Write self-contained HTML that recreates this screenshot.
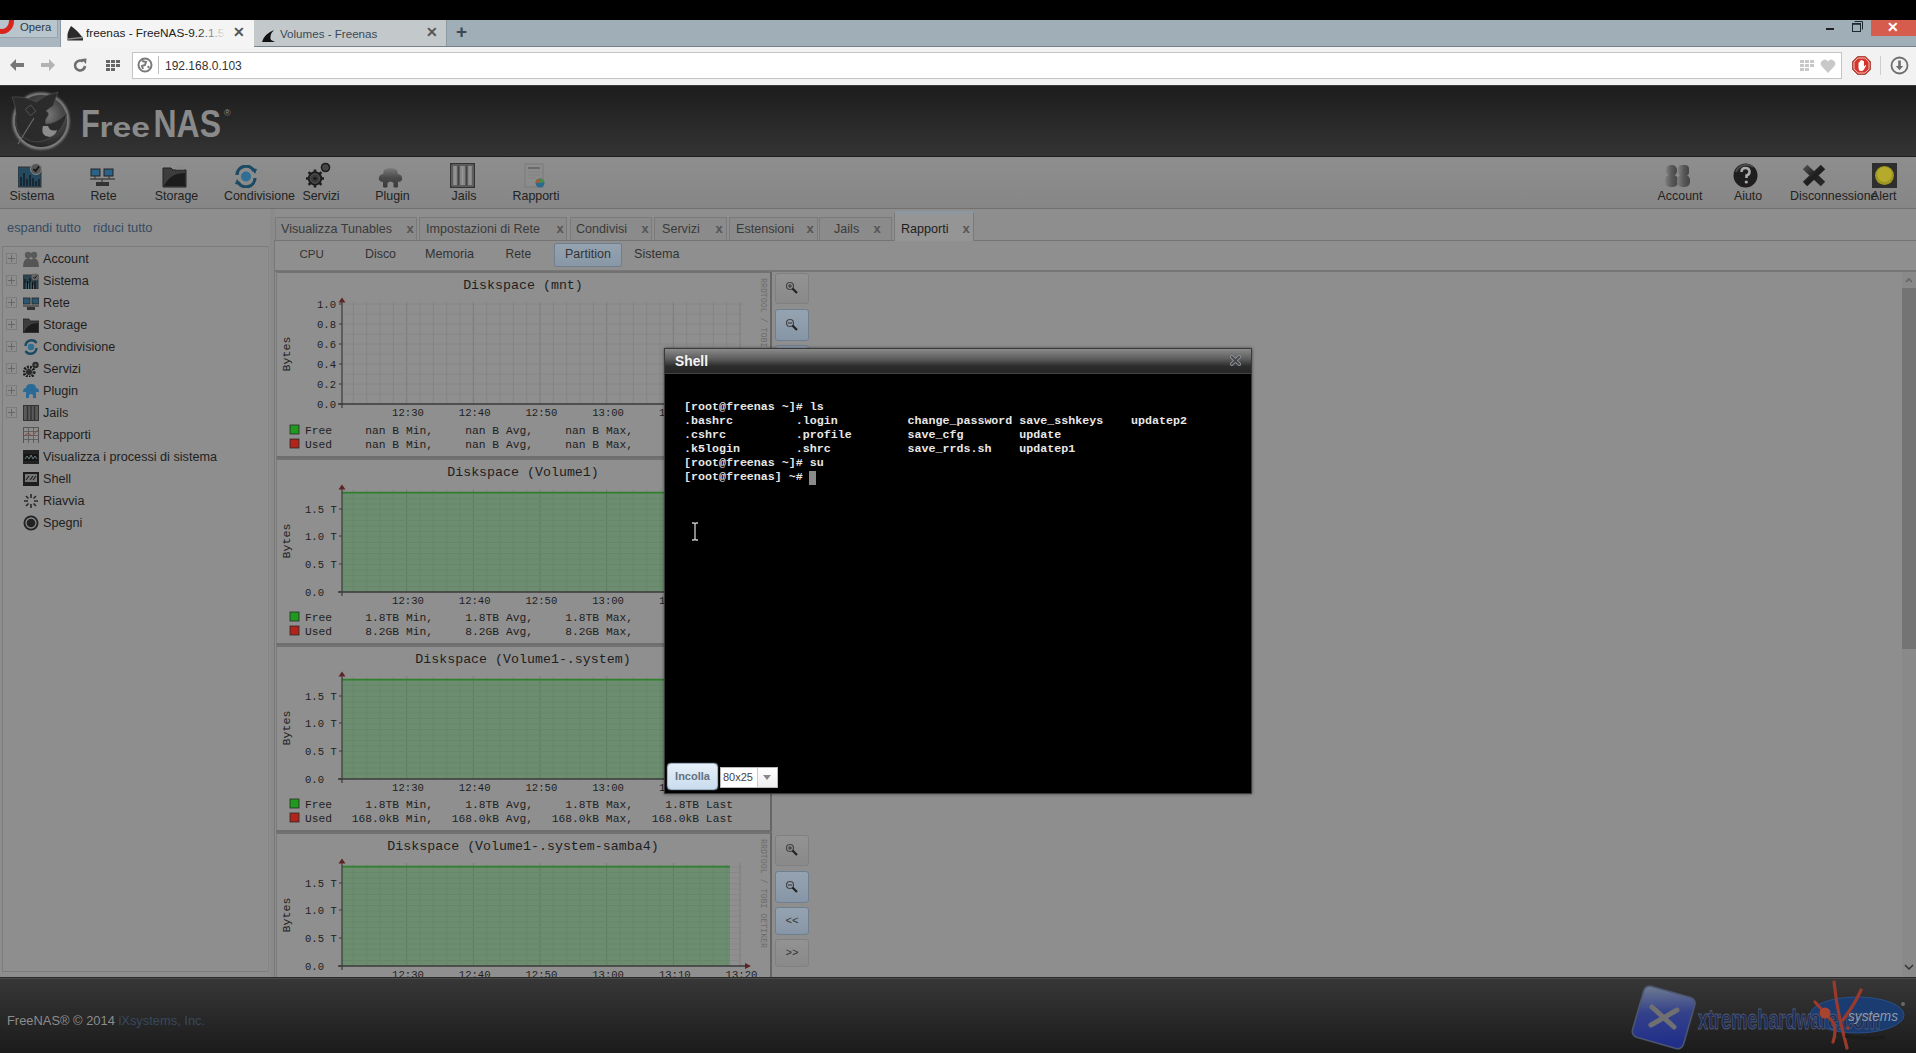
<!DOCTYPE html>
<html><head><meta charset="utf-8">
<style>
*{box-sizing:border-box}
html,body{margin:0;padding:0}
body{width:1916px;height:1053px;overflow:hidden;position:relative;background:#8e8e8e;font-family:"Liberation Sans",sans-serif;}
.a{position:absolute}
.mono{font-family:"Liberation Mono",monospace}
</style></head><body>
<!-- top black -->
<div class="a" style="left:0;top:0;width:1916px;height:20px;background:#000"></div>
<!-- tab strip -->
<div class="a" id="tabstrip" style="left:0;top:20px;width:1916px;height:27px;background:#a0aeb8;border-bottom:1px solid #74828c"></div>
<!-- address row -->
<div class="a" id="addr" style="left:0;top:47px;width:1916px;height:38px;background:#f2f2f2"></div>

<!-- Opera button -->
<div class="a" style="left:0;top:20px;width:61px;height:27px;background:#a9b6bf;border-right:1px solid #8d9aa3"></div>
<div class="a" style="left:0;top:20px;width:58px;height:18px;background:#b9c5cc;border:1px solid #97a4ad;border-top:none;border-left:none"></div>
<svg class="a" style="left:0;top:20px" width="16" height="14"><ellipse cx="2" cy="1" rx="9.5" ry="10.5" fill="none" stroke="#d8261c" stroke-width="5"/></svg>
<div class="a" style="left:20px;top:20px;font-size:11.3px;color:#2c3a44;line-height:15px">Opera</div>
<!-- active tab -->
<div class="a" style="left:61px;top:20px;width:193px;height:28px;background:#f4f4f4"></div>
<svg class="a" style="left:67px;top:25px" width="17" height="16" viewBox="0 0 17 16"><rect x="0" y="0" width="17" height="16" fill="#f4f4f4"/><path d="M0.5 15.5 L0.5 9 Q2 4 4 1 Q9 4 16 13 L16 15.5 Z" fill="#2a2a2a"/><path d="M1 14 L16 12.5" stroke="#8a8a8a" stroke-width="1.3"/></svg>
<div class="a" style="left:86px;top:26px;font-size:11.8px;color:#222;white-space:nowrap;line-height:15px;width:140px;overflow:hidden">freenas - FreeNAS-9.2.1.5-R</div>
<div class="a" style="left:196px;top:24px;width:30px;height:18px;background:linear-gradient(90deg,rgba(244,244,244,0),#f4f4f4)"></div>
<div class="a" style="left:233px;top:24px;font-size:14px;color:#555;font-weight:bold;line-height:16px">&#x2715;</div>
<!-- inactive tab -->
<div class="a" style="left:254px;top:20px;width:193px;height:26px;background:#c3c8cb;border-right:1px solid #8e9aa2"></div>
<svg class="a" style="left:262px;top:30px" width="14" height="12" viewBox="0 0 14 12"><path d="M0 12 Q2 4 12 0 Q7 5 9 10 L13 12 Z" fill="#111"/></svg>
<div class="a" style="left:280px;top:26px;font-size:11.6px;color:#3a4a55;white-space:nowrap;line-height:15px">Volumes - Freenas</div>
<div class="a" style="left:426px;top:24px;font-size:14px;color:#555;font-weight:bold;line-height:16px">&#x2715;</div>
<!-- plus -->
<div class="a" style="left:456px;top:21px;font-size:19px;color:#3b4852;font-weight:bold;line-height:22px">+</div>
<!-- window controls -->
<div class="a" style="left:1826px;top:28px;width:8px;height:2px;background:#222"></div>
<svg class="a" style="left:1851px;top:20px" width="13" height="13" viewBox="0 0 13 13"><path d="M3.5 1.5H11.5V9.5" fill="none" stroke="#1e2a30" stroke-width="1"/><rect x="1.5" y="3.5" width="8" height="8" fill="none" stroke="#1e2a30" stroke-width="1"/><path d="M1.5 4H9.5" stroke="#1e2a30" stroke-width="1.6"/></svg>
<div class="a" style="left:1871px;top:20px;width:45px;height:16px;background:#d65c4e"></div>
<div class="a" style="left:1887px;top:19px;font-size:14px;color:#fff;font-weight:bold;line-height:16px">&#x2715;</div>
<!-- nav icons -->
<svg class="a" style="left:9px;top:58px" width="16" height="14" viewBox="0 0 16 14"><path d="M1 7 L7 1 L7 5 L15 5 L15 9 L7 9 L7 13 Z" fill="#777"/></svg>
<svg class="a" style="left:40px;top:58px" width="16" height="14" viewBox="0 0 16 14"><path d="M15 7 L9 1 L9 5 L1 5 L1 9 L9 9 L9 13 Z" fill="#b3b3b3"/></svg>
<svg class="a" style="left:73px;top:58px" width="15" height="15" viewBox="0 0 15 15"><path d="M12 8 A5 5 0 1 1 10 3.5" fill="none" stroke="#6e6e6e" stroke-width="2.6"/><path d="M8 1 L13.5 0.5 L13 6 Z" fill="#6e6e6e"/></svg>
<svg class="a" style="left:106px;top:60px" width="15" height="11" viewBox="0 0 15 11"><g fill="#666"><rect x="0" y="0" width="4" height="3"/><rect x="5" y="0" width="4" height="3"/><rect x="10" y="0" width="4" height="3"/><rect x="0" y="4" width="4" height="3"/><rect x="5" y="4" width="4" height="3"/><rect x="10" y="4" width="4" height="3"/><rect x="0" y="8" width="4" height="3"/><rect x="5" y="8" width="4" height="3"/></g></svg>
<!-- url field -->
<div class="a" style="left:132px;top:52px;width:1710px;height:27px;background:#fff;border:1px solid #c4c4c4"></div>
<svg class="a" style="left:137px;top:57px" width="16" height="16" viewBox="0 0 16 16"><circle cx="8" cy="8" r="6.5" fill="none" stroke="#7a7a7a" stroke-width="2"/><path d="M5 4 L9 5 L8 8 L5 9 L6 12 M11 9 L12 11" stroke="#7a7a7a" stroke-width="2" fill="none"/></svg>
<div class="a" style="left:158px;top:56px;width:1px;height:18px;background:#bbb"></div>
<div class="a" style="left:165px;top:59px;font-size:12px;color:#333;line-height:15px">192.168.0.103</div>
<svg class="a" style="left:1800px;top:60px" width="15" height="12" viewBox="0 0 15 12"><g fill="#c8c8c8"><rect x="0" y="0" width="4" height="3"/><rect x="5" y="0" width="4" height="3"/><rect x="10" y="0" width="4" height="3"/><rect x="0" y="4" width="4" height="3"/><rect x="5" y="4" width="4" height="3"/><rect x="10" y="4" width="4" height="3"/><rect x="0" y="8" width="4" height="3"/><rect x="5" y="8" width="4" height="3"/></g></svg>
<svg class="a" style="left:1820px;top:59px" width="16" height="14" viewBox="0 0 16 14"><path d="M8 14 L1.5 7 A3.8 3.8 0 0 1 8 2.5 A3.8 3.8 0 0 1 14.5 7 Z" fill="#c8c8c8"/></svg>
<svg class="a" style="left:1852px;top:56px" width="19" height="19" viewBox="0 0 19 19"><path d="M5.6 0.5 L13.4 0.5 L18.5 5.6 L18.5 13.4 L13.4 18.5 L5.6 18.5 L0.5 13.4 L0.5 5.6 Z" fill="#d6342a" stroke="#9a3a30" stroke-width="0.8"/><path d="M6.1 2 L12.9 2 L17 6.1 L17 12.9 L12.9 17 L6.1 17 L2 12.9 L2 6.1 Z" fill="none" stroke="#f4d0c8" stroke-width="0.9"/><path d="M6.5 10 L6.5 6.5 Q7.2 5.8 7.8 6.5 L7.8 9 L7.8 4.8 Q8.5 4 9.2 4.8 L9.2 8.8 L9.2 4.3 Q9.9 3.6 10.6 4.3 L10.6 9 L10.6 5.2 Q11.3 4.6 12 5.2 L12 10.5 L13.2 9.2 Q14 8.8 14.2 9.6 L12 13.5 Q11 15 9 15 Q6.5 15 6.5 12 Z" fill="#fff"/></svg>
<div class="a" style="left:1880px;top:56px;width:1px;height:19px;background:#ccc"></div>
<svg class="a" style="left:1890px;top:56px" width="19" height="19" viewBox="0 0 19 19"><circle cx="9.5" cy="9.5" r="8" fill="none" stroke="#6e6e6e" stroke-width="1.8"/><path d="M9.5 4.5 L9.5 11" stroke="#6e6e6e" stroke-width="2.6"/><path d="M5.8 10 L13.2 10 L9.5 14.2 Z" fill="#6e6e6e"/></svg>

<!-- freenas header -->
<div class="a" id="hdr" style="left:0;top:85px;width:1916px;height:71px;background:linear-gradient(#1c1c1c,#343434)"></div>
<div class="a" style="left:0;top:156px;width:1916px;height:1px;background:#1e1e1e"></div>
<!-- toolbar -->
<div class="a" id="tb" style="left:0;top:157px;width:1916px;height:52px;background:linear-gradient(#8e8e8e,#868686);border-bottom:1px solid #707070"></div>

<div class="a" style="left:0;top:85px;width:1916px;height:1px;background:#3a3a3a"></div>
<!-- shark logo -->
<svg class="a" style="left:6px;top:88px" width="70" height="66" viewBox="0 0 70 66">
<defs><radialGradient id="ball" cx="62%" cy="38%" r="62%"><stop offset="0%" stop-color="#7a7a7a"/><stop offset="45%" stop-color="#4a4a4a"/><stop offset="100%" stop-color="#262626"/></radialGradient>
<filter id="gl" x="-20%" y="-20%" width="140%" height="140%"><feGaussianBlur stdDeviation="1.2"/></filter></defs>
<circle cx="35" cy="33" r="27" fill="none" stroke="#8a8a8a" stroke-width="3" filter="url(#gl)"/>
<circle cx="35" cy="33" r="26" fill="url(#ball)"/>
<path d="M6 9 Q20 8 30 14 Q40 6 52 4 Q49 12 47 18 Q43 20 40 23 Q44 25 42 28 Q38 32 40 36 Q50 36 61 25 Q58 42 44 50 Q30 58 18 50 Q8 42 10 26 Q10 18 6 9 Z" fill="#2b2b2b" stroke="#555" stroke-width="0.6"/>
<path d="M37 38 Q34 48 44 49 Q50 47 51 42 Q44 44 42 38 Z" fill="#8c8c8c"/>
<path d="M12 56 L28 30" stroke="#6a6a6a" stroke-width="1.2"/>
<g transform="rotate(-40 25 22)"><rect x="21" y="18" width="7" height="8" fill="none" stroke="#5a5a5a" stroke-width="0.8"/></g>
</svg>
<svg class="a" style="left:70px;top:95px" width="170" height="50" viewBox="70 95 170 50"><g fill="#8a8a8a" font-family="Liberation Sans" font-weight="bold">
<text x="81" y="136.8" font-size="38.4" textLength="18.8" lengthAdjust="spacingAndGlyphs">F</text>
<text x="99.5" y="136.8" font-size="28" textLength="50.5" lengthAdjust="spacingAndGlyphs">ree</text>
<text x="153.5" y="136.8" font-size="38.4" textLength="67.5" lengthAdjust="spacingAndGlyphs">NAS</text>
</g></svg>
<div class="a" style="left:224px;top:108px;font-size:9px;color:#8a8a8a;line-height:10px">&#174;</div>

<!-- Sistema -->
<svg class="a" style="left:18px;top:163px" width="25" height="25" viewBox="0 0 25 25"><rect x="0" y="4" width="23" height="20" fill="#254a60" stroke="#333"/><g stroke="#111" stroke-width="1.2"><path d="M3 23 V14 M6 23 V10 M9 23 V16 M12 23 V12 M15 23 V15 M18 23 V18 M21 23 V16"/></g><circle cx="18" cy="6" r="5.5" fill="#555" stroke="#888"/><path d="M15.5 6 L17.5 8 L21 3.5" stroke="#111" stroke-width="1.6" fill="none"/></svg>
<div class="a" style="left:9px;top:189px;width:46px;font-size:12.4px;color:#222;line-height:14px;text-align:center">Sistema</div>
<!-- Rete -->
<svg class="a" style="left:90px;top:168px" width="25" height="20" viewBox="0 0 25 20"><rect x="1" y="1" width="9" height="7" fill="#2a6387" stroke="#222"/><rect x="14" y="1" width="9" height="7" fill="#2a6387" stroke="#222"/><path d="M0 11 H25" stroke="#444" stroke-width="1.5"/><path d="M5 8 V11 M19 8 V11 M12 11 V15" stroke="#333"/><rect x="6" y="14" width="13" height="4" fill="#333"/></svg>
<div class="a" style="left:90px;top:189px;width:27px;font-size:12.4px;color:#222;line-height:14px;text-align:center">Rete</div>
<!-- Storage -->
<svg class="a" style="left:162px;top:165px" width="25" height="23" viewBox="0 0 25 23"><path d="M1 3 H9 L11 5 H24 V22 H1 Z" fill="#3d3d3d" stroke="#222"/><path d="M2 21 Q8 8 23 8 V21 Z" fill="#1c1c1c"/><path d="M14 1 H22 V5 H14 Z" fill="#888" opacity="0.6"/></svg>
<div class="a" style="left:154px;top:189px;width:45px;font-size:12.4px;color:#222;line-height:14px;text-align:center">Storage</div>
<!-- Condivisione -->
<svg class="a" style="left:233px;top:165px" width="26" height="23" viewBox="0 0 26 23"><path d="M4 10 A9 9 0 0 1 21 6" fill="none" stroke="#1d4a63" stroke-width="3.2"/><path d="M22 13 A9 9 0 0 1 5 17" fill="none" stroke="#1d4a63" stroke-width="3.2"/><path d="M18 3 L24 4 L22 9 Z M8 20 L2 19 L4 14 Z" fill="#1d4a63"/><circle cx="13" cy="11.5" r="5" fill="#2f6f95"/></svg>
<div class="a" style="left:223px;top:189px;width:73px;font-size:12.4px;color:#222;line-height:14px;text-align:center">Condivisione</div>
<!-- Servizi -->
<svg class="a" style="left:306px;top:162px" width="25" height="26" viewBox="0 0 25 26"><g fill="#1c1c1c"><circle cx="9" cy="16.5" r="7.2"/><g stroke="#1c1c1c" stroke-width="2.6"><path d="M9 7.5V25.5M0 16.5H18M2.6 10.1L15.4 22.9M15.4 10.1L2.6 22.9"/></g></g><circle cx="9" cy="16.5" r="4.8" fill="#3a3a3a" stroke="#555" stroke-width="1"/><circle cx="9" cy="16.5" r="1.8" fill="#1c1c1c"/><circle cx="19.5" cy="5.5" r="4.8" fill="#1c1c1c"/><circle cx="19.5" cy="5.5" r="2.8" fill="#444" stroke="#555" stroke-width="0.8"/></svg>
<div class="a" style="left:301px;top:189px;width:40px;font-size:12.4px;color:#222;line-height:14px;text-align:center">Servizi</div>
<!-- Plugin -->
<svg class="a" style="left:378px;top:167px" width="25" height="21" viewBox="0 0 25 21"><defs><linearGradient id="plg" x1="0" y1="0" x2="0" y2="1"><stop offset="0" stop-color="#7a7a7a"/><stop offset="0.5" stop-color="#4a4a4a"/><stop offset="1" stop-color="#3a3a3a"/></linearGradient></defs><path d="M6 3 Q12.5 -1 19 3 L20 7 Q25 8 24 13 Q23 15 20 15 L20 20 Q18 21 15.5 20 L15.5 16 Q12.5 13 9.5 16 L9.5 20 Q7 21 5 20 L5 15 Q2 15 1 13 Q0 8 5 7 Z" fill="url(#plg)"/></svg>
<div class="a" style="left:375px;top:189px;width:35px;font-size:12.4px;color:#222;line-height:14px;text-align:center">Plugin</div>
<!-- Jails -->
<svg class="a" style="left:450px;top:163px" width="25" height="25" viewBox="0 0 25 25"><rect x="0.75" y="0.75" width="23.5" height="23.5" fill="#858585" stroke="#333" stroke-width="1.5"/><rect x="2.5" y="2.5" width="20" height="20" fill="none" stroke="#555" stroke-width="0.8"/><path d="M8.5 2.5V22.5M16.5 2.5V22.5" stroke="#444" stroke-width="2.2"/><path d="M5 3V22M12.5 3V22M20 3V22" stroke="#999" stroke-width="1.2"/></svg>
<div class="a" style="left:451px;top:189px;width:26px;font-size:12.4px;color:#222;line-height:14px;text-align:center">Jails</div>
<!-- Rapporti -->
<svg class="a" style="left:524px;top:163px" width="22" height="25" viewBox="0 0 22 25"><rect x="1" y="1" width="18" height="23" fill="#8c8c8c" stroke="#7a7a7a"/><path d="M4 5 H16" stroke="#6a6a6a" stroke-width="2"/><path d="M4 9 H16 M4 12 H16 M4 15 H12" stroke="#808080" stroke-width="0.8"/><circle cx="16" cy="20" r="4.5" fill="#2d6a90"/><path d="M11.5 20 A4.5 4.5 0 0 1 16 15.5 L16 20 Z" fill="#9a6030"/><path d="M16 15.5 A4.5 4.5 0 0 1 20.5 19 L16 20 Z" fill="#4a8a4a"/></svg>
<div class="a" style="left:512px;top:189px;width:48px;font-size:12.4px;color:#222;line-height:14px;text-align:center">Rapporti</div>
<!-- Account -->
<svg class="a" style="left:1665px;top:164px" width="26" height="24" viewBox="0 0 26 24"><defs><linearGradient id="accg" x1="0" y1="0" x2="1" y2="0"><stop offset="0" stop-color="#808080"/><stop offset="0.5" stop-color="#5a5a5a"/><stop offset="1" stop-color="#444"/></linearGradient></defs><rect x="1" y="1" width="11" height="11" rx="5" fill="url(#accg)"/><rect x="13" y="1" width="11" height="11" rx="4" fill="url(#accg)"/><rect x="0" y="11" width="13" height="12" rx="5" fill="url(#accg)"/><rect x="12" y="11" width="13" height="12" rx="5" fill="url(#accg)"/></svg>
<div class="a" style="left:1657px;top:189px;width:46px;font-size:12.4px;color:#222;line-height:14px;text-align:center">Account</div>
<!-- Aiuto -->
<svg class="a" style="left:1733px;top:163px" width="25" height="25" viewBox="0 0 25 25"><circle cx="12.5" cy="12.5" r="12" fill="#1e1e1e"/><path d="M3 9 A11 11 0 0 1 20 4" stroke="#4a4a4a" stroke-width="2" fill="none"/><path d="M8.5 9 Q8.5 5 12.5 5 Q16.5 5 16.5 9 Q16.5 11.5 13.5 12.5 L13.5 15" stroke="#aaa" stroke-width="2.6" fill="none"/><circle cx="13.3" cy="19" r="1.6" fill="#aaa"/></svg>
<div class="a" style="left:1733px;top:189px;width:30px;font-size:12.4px;color:#222;line-height:14px;text-align:center">Aiuto</div>
<!-- Disconnessione -->
<svg class="a" style="left:1801px;top:163px" width="26" height="25" viewBox="0 0 26 25"><defs><linearGradient id="xg" x1="0" y1="0" x2="1" y2="1"><stop offset="0" stop-color="#4a4a4a"/><stop offset="0.5" stop-color="#1e1e1e"/><stop offset="1" stop-color="#2a2a2a"/></linearGradient></defs><path d="M4 4 L22 21 M22 4 L4 21" stroke="url(#xg)" stroke-width="6.5" stroke-linecap="butt"/></svg>
<div class="a" style="left:1790px;top:189px;font-size:12.4px;color:#222;line-height:14px;white-space:nowrap">Disconnessione</div>
<!-- Alert -->
<svg class="a" style="left:1871px;top:163px" width="27" height="25" viewBox="0 0 27 25"><rect x="1" y="0" width="25" height="25" fill="#2e2e2e"/><circle cx="13.5" cy="12.5" r="9.5" fill="#9c9520"/><circle cx="13.5" cy="11.5" r="7.5" fill="#b5aa2c"/></svg>
<div class="a" style="left:1871px;top:189px;font-size:12.4px;color:#222;line-height:14px;white-space:nowrap">Alert</div>

<div class="a" style="left:7px;top:220px;font-size:12.9px;color:#354b63;line-height:15px;white-space:nowrap">espandi tutto</div>
<div class="a" style="left:93px;top:220px;font-size:12.9px;color:#354b63;line-height:15px;white-space:nowrap">riduci tutto</div>
<div class="a" style="left:2px;top:246px;width:267px;height:726px;border:1px solid #7c7c7c;border-right-color:#858585"></div>
<div class="a" style="left:270px;top:209px;width:5px;height:768px;background:#8a8a8a"></div>
<div class="a" style="left:274px;top:240px;width:1px;height:737px;background:#777"></div>
<div class="a" style="left:6px;top:253px;width:11px;height:11px;border:1px solid #7c7c7c;background:#8e8e8e"></div>
<div class="a" style="left:8px;top:258px;width:7px;height:1px;background:#666"></div><div class="a" style="left:11px;top:255px;width:1px;height:7px;background:#666"></div>
<svg class="a" style="left:23px;top:251px" width="16" height="16" viewBox="0 0 16 16"><circle cx="5" cy="4" r="3.2" fill="#5a5a5a"/><circle cx="11" cy="4" r="3.2" fill="#5a5a5a"/><path d="M0 16 Q0 8 5 7 Q10 8 10 16Z M6 16 Q6 8 11 7 Q16 8 16 16Z" fill="#555"/></svg>
<div class="a" style="left:43px;top:252px;font-size:12.65px;color:#1e1e1e;line-height:14px;white-space:nowrap">Account</div>
<div class="a" style="left:6px;top:275px;width:11px;height:11px;border:1px solid #7c7c7c;background:#8e8e8e"></div>
<div class="a" style="left:8px;top:280px;width:7px;height:1px;background:#666"></div><div class="a" style="left:11px;top:277px;width:1px;height:7px;background:#666"></div>
<svg class="a" style="left:23px;top:273px" width="16" height="16" viewBox="0 0 16 16"><rect x="0" y="2" width="15" height="14" fill="#2c4450" stroke="#333"/><path d="M2 16V6M4.5 16V8M7 16V5M9.5 16V9M12 16V7" stroke="#111" stroke-width="1.2"/><path d="M3 16V10M5.5 16V11M8 16V9M10.5 16V12" stroke="#5a7a88" stroke-width="0.7"/><circle cx="12" cy="4" r="3.5" fill="#666"/><path d="M10.5 4 L11.8 5.3 L14 2.5" stroke="#111" fill="none"/></svg>
<div class="a" style="left:43px;top:274px;font-size:12.65px;color:#1e1e1e;line-height:14px;white-space:nowrap">Sistema</div>
<div class="a" style="left:6px;top:297px;width:11px;height:11px;border:1px solid #7c7c7c;background:#8e8e8e"></div>
<div class="a" style="left:8px;top:302px;width:7px;height:1px;background:#666"></div><div class="a" style="left:11px;top:299px;width:1px;height:7px;background:#666"></div>
<svg class="a" style="left:23px;top:295px" width="16" height="16" viewBox="0 0 16 16"><rect x="0" y="3" width="7" height="6" fill="#2a5870" stroke="#222" stroke-width="0.8"/><rect x="9" y="3" width="7" height="6" fill="#2a5870" stroke="#222" stroke-width="0.8"/><path d="M0 11H16" stroke="#444" stroke-width="1.4"/><rect x="4" y="12" width="8" height="3" fill="#333"/></svg>
<div class="a" style="left:43px;top:296px;font-size:12.65px;color:#1e1e1e;line-height:14px;white-space:nowrap">Rete</div>
<div class="a" style="left:6px;top:319px;width:11px;height:11px;border:1px solid #7c7c7c;background:#8e8e8e"></div>
<div class="a" style="left:8px;top:324px;width:7px;height:1px;background:#666"></div><div class="a" style="left:11px;top:321px;width:1px;height:7px;background:#666"></div>
<svg class="a" style="left:23px;top:317px" width="16" height="16" viewBox="0 0 16 16"><path d="M0 2H6L7 4H16V16H0Z" fill="#3d3d3d" stroke="#222" stroke-width="0.8"/><path d="M1 15Q5 6 15 6V15Z" fill="#1c1c1c"/></svg>
<div class="a" style="left:43px;top:318px;font-size:12.65px;color:#1e1e1e;line-height:14px;white-space:nowrap">Storage</div>
<div class="a" style="left:6px;top:341px;width:11px;height:11px;border:1px solid #7c7c7c;background:#8e8e8e"></div>
<div class="a" style="left:8px;top:346px;width:7px;height:1px;background:#666"></div><div class="a" style="left:11px;top:343px;width:1px;height:7px;background:#666"></div>
<svg class="a" style="left:23px;top:339px" width="16" height="16" viewBox="0 0 16 16"><path d="M2.5 7A6 6 0 0 1 13.5 4" fill="none" stroke="#1d4a63" stroke-width="2.4"/><path d="M13.5 9A6 6 0 0 1 2.5 12" fill="none" stroke="#1d4a63" stroke-width="2.4"/><circle cx="8" cy="8" r="3.2" fill="#2f6f95"/></svg>
<div class="a" style="left:43px;top:340px;font-size:12.65px;color:#1e1e1e;line-height:14px;white-space:nowrap">Condivisione</div>
<div class="a" style="left:6px;top:363px;width:11px;height:11px;border:1px solid #7c7c7c;background:#8e8e8e"></div>
<div class="a" style="left:8px;top:368px;width:7px;height:1px;background:#666"></div><div class="a" style="left:11px;top:365px;width:1px;height:7px;background:#666"></div>
<svg class="a" style="left:23px;top:361px" width="16" height="16" viewBox="0 0 16 16"><circle cx="6" cy="11" r="5" fill="none" stroke="#1a1a1a" stroke-width="3" stroke-dasharray="1.8 1.2"/><circle cx="6" cy="11" r="3" fill="#2a2a2a"/><circle cx="12.5" cy="4" r="3.2" fill="#2a2a2a"/><circle cx="12.5" cy="4" r="1.2" fill="#666"/></svg>
<div class="a" style="left:43px;top:362px;font-size:12.65px;color:#1e1e1e;line-height:14px;white-space:nowrap">Servizi</div>
<div class="a" style="left:6px;top:385px;width:11px;height:11px;border:1px solid #7c7c7c;background:#8e8e8e"></div>
<div class="a" style="left:8px;top:390px;width:7px;height:1px;background:#666"></div><div class="a" style="left:11px;top:387px;width:1px;height:7px;background:#666"></div>
<svg class="a" style="left:23px;top:383px" width="16" height="16" viewBox="0 0 16 16"><path d="M4 2Q8 0 12 2L13 5Q16 5 16 9L13 9L13 15L10 15L10 12Q8 10 6 12L6 15L3 15L3 9L0 9Q0 5 3 5Z" fill="#2a6a96"/></svg>
<div class="a" style="left:43px;top:384px;font-size:12.65px;color:#1e1e1e;line-height:14px;white-space:nowrap">Plugin</div>
<div class="a" style="left:6px;top:407px;width:11px;height:11px;border:1px solid #7c7c7c;background:#8e8e8e"></div>
<div class="a" style="left:8px;top:412px;width:7px;height:1px;background:#666"></div><div class="a" style="left:11px;top:409px;width:1px;height:7px;background:#666"></div>
<svg class="a" style="left:23px;top:405px" width="16" height="16" viewBox="0 0 16 16"><rect x="0.5" y="0.5" width="15" height="15" fill="#5a5a5a" stroke="#333"/><path d="M4.5 1V15M8 1V15M11.5 1V15" stroke="#333" stroke-width="1.4"/></svg>
<div class="a" style="left:43px;top:406px;font-size:12.65px;color:#1e1e1e;line-height:14px;white-space:nowrap">Jails</div>
<svg class="a" style="left:23px;top:427px" width="16" height="16" viewBox="0 0 16 16"><rect x="0.5" y="0.5" width="15" height="16" fill="#8e8e8e" stroke="#555"/><path d="M0 4.5H16M0 8.5H16M0 12.5H16M5.5 0V16M10.5 0V16" stroke="#555" stroke-width="0.8"/><path d="M1 9L5 6L9 9L15 3" stroke="#8a4a40" stroke-width="1" fill="none"/></svg>
<div class="a" style="left:43px;top:428px;font-size:12.65px;color:#1e1e1e;line-height:14px;white-space:nowrap">Rapporti</div>
<svg class="a" style="left:23px;top:449px" width="16" height="16" viewBox="0 0 16 16"><rect x="0" y="1" width="16" height="14" fill="#222"/><rect x="1" y="5" width="14" height="7" fill="#151515"/><path d="M2 10L4 7L6 10L8 6L10 10L12 7L14 10" stroke="#6a7a80" stroke-width="1" fill="none"/></svg>
<div class="a" style="left:43px;top:450px;font-size:12.65px;color:#1e1e1e;line-height:14px;white-space:nowrap">Visualizza i processi di sistema</div>
<svg class="a" style="left:23px;top:471px" width="16" height="16" viewBox="0 0 16 16"><rect x="0" y="1" width="16" height="14" fill="#1d1d1d"/><rect x="2" y="3" width="12" height="8" fill="#777"/><path d="M3 9L6 5M7 9L10 5M10 9L13 5" stroke="#222" stroke-width="1.2"/></svg>
<div class="a" style="left:43px;top:472px;font-size:12.65px;color:#1e1e1e;line-height:14px;white-space:nowrap">Shell</div>
<svg class="a" style="left:23px;top:493px" width="16" height="16" viewBox="0 0 16 16"><g stroke="#2a2a2a" stroke-width="1.6"><path d="M8 1V5M8 11V15M1 8H5M11 8H15M3 3L5.5 5.5M10.5 10.5L13 13M13 3L10.5 5.5M5.5 10.5L3 13"/></g></svg>
<div class="a" style="left:43px;top:494px;font-size:12.65px;color:#1e1e1e;line-height:14px;white-space:nowrap">Riavvia</div>
<svg class="a" style="left:23px;top:515px" width="16" height="16" viewBox="0 0 16 16"><circle cx="8" cy="8" r="7.5" fill="#222"/><circle cx="8" cy="8" r="5" fill="none" stroke="#888" stroke-width="1.3"/><circle cx="8" cy="8" r="3" fill="#222"/></svg>
<div class="a" style="left:43px;top:516px;font-size:12.65px;color:#1e1e1e;line-height:14px;white-space:nowrap">Spegni</div>
<div class="a" style="left:275px;top:240px;width:1641px;height:1px;background:#747474"></div>
<div class="a" style="left:275px;top:217px;width:142px;height:23px;background:#8b8b8b;border:1px solid #7a7a7a;border-bottom:none;"></div>
<div class="a" style="left:281px;top:222px;font-size:12.6px;color:#3a3a3a;line-height:15px;white-space:nowrap">Visualizza Tunables</div>
<div class="a" style="left:406.5px;top:221px;font-size:13px;font-weight:bold;color:#555;line-height:15px">x</div>
<div class="a" style="left:419px;top:217px;width:148px;height:23px;background:#8b8b8b;border:1px solid #7a7a7a;border-bottom:none;"></div>
<div class="a" style="left:426px;top:222px;font-size:12.6px;color:#3a3a3a;line-height:15px;white-space:nowrap">Impostazioni di Rete</div>
<div class="a" style="left:556.5px;top:221px;font-size:13px;font-weight:bold;color:#555;line-height:15px">x</div>
<div class="a" style="left:570px;top:217px;width:82px;height:23px;background:#8b8b8b;border:1px solid #7a7a7a;border-bottom:none;"></div>
<div class="a" style="left:576px;top:222px;font-size:12.6px;color:#3a3a3a;line-height:15px;white-space:nowrap">Condivisi</div>
<div class="a" style="left:641.5px;top:221px;font-size:13px;font-weight:bold;color:#555;line-height:15px">x</div>
<div class="a" style="left:654px;top:217px;width:73px;height:23px;background:#8b8b8b;border:1px solid #7a7a7a;border-bottom:none;"></div>
<div class="a" style="left:662px;top:222px;font-size:12.6px;color:#3a3a3a;line-height:15px;white-space:nowrap">Servizi</div>
<div class="a" style="left:715.5px;top:221px;font-size:13px;font-weight:bold;color:#555;line-height:15px">x</div>
<div class="a" style="left:729px;top:217px;width:89px;height:23px;background:#8b8b8b;border:1px solid #7a7a7a;border-bottom:none;"></div>
<div class="a" style="left:736px;top:222px;font-size:12.6px;color:#3a3a3a;line-height:15px;white-space:nowrap">Estensioni</div>
<div class="a" style="left:806.5px;top:221px;font-size:13px;font-weight:bold;color:#555;line-height:15px">x</div>
<div class="a" style="left:819px;top:217px;width:73px;height:23px;background:#8b8b8b;border:1px solid #7a7a7a;border-bottom:none;"></div>
<div class="a" style="left:834px;top:222px;font-size:12.6px;color:#3a3a3a;line-height:15px;white-space:nowrap">Jails</div>
<div class="a" style="left:873.5px;top:221px;font-size:13px;font-weight:bold;color:#555;line-height:15px">x</div>
<div class="a" style="left:894px;top:211px;width:80px;height:30px;background:#959595;border:1px solid #7a7a7a;border-bottom:none;border-top:3px solid #8d97a0"></div>
<div class="a" style="left:901px;top:222px;font-size:12.6px;color:#1e1e1e;line-height:15px;white-space:nowrap">Rapporti</div>
<div class="a" style="left:962.5px;top:221px;font-size:13px;font-weight:bold;color:#555;line-height:15px">x</div>
<div class="a" style="left:275px;top:241px;width:1641px;height:31px;background:#8f8f8f;border-bottom:2px solid #767676"></div>
<div class="a" style="left:554px;top:243px;width:68px;height:24px;background:linear-gradient(#95a3b1,#8897a6);border:1px solid #6f7f8f;border-radius:2px"></div>
<div class="a" style="left:299.5px;top:247px;font-size:11.5px;color:#333;line-height:15px;white-space:nowrap">CPU</div>
<div class="a" style="left:365px;top:247px;font-size:12.4px;color:#333;line-height:15px;white-space:nowrap">Disco</div>
<div class="a" style="left:425px;top:247px;font-size:12.6px;color:#333;line-height:15px;white-space:nowrap">Memoria</div>
<div class="a" style="left:505.6px;top:247px;font-size:12.1px;color:#333;line-height:15px;white-space:nowrap">Rete</div>
<div class="a" style="left:565px;top:247px;font-size:12.5px;color:#333;line-height:15px;white-space:nowrap">Partition</div>
<div class="a" style="left:634px;top:247px;font-size:12.6px;color:#333;line-height:15px;white-space:nowrap">Sistema</div>
<div class="a" style="left:276px;top:271px;width:496px;height:187px;background:#8f8f8f;border:1px solid #7b7b7b;border-top:2px solid #727272;border-bottom:2px solid #6e6e6e"></div>
<svg class="a" style="left:276px;top:272px" width="496" height="185" viewBox="0 0 496 185">
<line x1="77.4" y1="30" x2="77.4" y2="132" stroke="#868686" stroke-width="1"/>
<line x1="90.7" y1="30" x2="90.7" y2="132" stroke="#868686" stroke-width="1"/>
<line x1="104.0" y1="30" x2="104.0" y2="132" stroke="#868686" stroke-width="1"/>
<line x1="117.4" y1="30" x2="117.4" y2="132" stroke="#868686" stroke-width="1"/>
<line x1="130.7" y1="30" x2="130.7" y2="132" stroke="#7e7a7a" stroke-width="1"/>
<line x1="144.0" y1="30" x2="144.0" y2="132" stroke="#868686" stroke-width="1"/>
<line x1="157.4" y1="30" x2="157.4" y2="132" stroke="#868686" stroke-width="1"/>
<line x1="170.7" y1="30" x2="170.7" y2="132" stroke="#868686" stroke-width="1"/>
<line x1="184.0" y1="30" x2="184.0" y2="132" stroke="#868686" stroke-width="1"/>
<line x1="197.4" y1="30" x2="197.4" y2="132" stroke="#7e7a7a" stroke-width="1"/>
<line x1="210.7" y1="30" x2="210.7" y2="132" stroke="#868686" stroke-width="1"/>
<line x1="224.0" y1="30" x2="224.0" y2="132" stroke="#868686" stroke-width="1"/>
<line x1="237.4" y1="30" x2="237.4" y2="132" stroke="#868686" stroke-width="1"/>
<line x1="250.7" y1="30" x2="250.7" y2="132" stroke="#868686" stroke-width="1"/>
<line x1="264.0" y1="30" x2="264.0" y2="132" stroke="#7e7a7a" stroke-width="1"/>
<line x1="277.4" y1="30" x2="277.4" y2="132" stroke="#868686" stroke-width="1"/>
<line x1="290.7" y1="30" x2="290.7" y2="132" stroke="#868686" stroke-width="1"/>
<line x1="304.0" y1="30" x2="304.0" y2="132" stroke="#868686" stroke-width="1"/>
<line x1="317.4" y1="30" x2="317.4" y2="132" stroke="#868686" stroke-width="1"/>
<line x1="330.7" y1="30" x2="330.7" y2="132" stroke="#7e7a7a" stroke-width="1"/>
<line x1="344.0" y1="30" x2="344.0" y2="132" stroke="#868686" stroke-width="1"/>
<line x1="357.4" y1="30" x2="357.4" y2="132" stroke="#868686" stroke-width="1"/>
<line x1="370.7" y1="30" x2="370.7" y2="132" stroke="#868686" stroke-width="1"/>
<line x1="384.0" y1="30" x2="384.0" y2="132" stroke="#868686" stroke-width="1"/>
<line x1="397.4" y1="30" x2="397.4" y2="132" stroke="#7e7a7a" stroke-width="1"/>
<line x1="410.7" y1="30" x2="410.7" y2="132" stroke="#868686" stroke-width="1"/>
<line x1="424.0" y1="30" x2="424.0" y2="132" stroke="#868686" stroke-width="1"/>
<line x1="437.4" y1="30" x2="437.4" y2="132" stroke="#868686" stroke-width="1"/>
<line x1="450.7" y1="30" x2="450.7" y2="132" stroke="#868686" stroke-width="1"/>
<line x1="464.0" y1="30" x2="464.0" y2="132" stroke="#7e7a7a" stroke-width="1"/>
<line x1="66" y1="122.0" x2="466" y2="122.0" stroke="#868686" stroke-width="1"/>
<line x1="66" y1="112.0" x2="466" y2="112.0" stroke="#868686" stroke-width="1"/>
<line x1="66" y1="102.0" x2="466" y2="102.0" stroke="#868686" stroke-width="1"/>
<line x1="66" y1="92.0" x2="466" y2="92.0" stroke="#868686" stroke-width="1"/>
<line x1="66" y1="82.0" x2="466" y2="82.0" stroke="#868686" stroke-width="1"/>
<line x1="66" y1="72.0" x2="466" y2="72.0" stroke="#868686" stroke-width="1"/>
<line x1="66" y1="62.0" x2="466" y2="62.0" stroke="#868686" stroke-width="1"/>
<line x1="66" y1="52.0" x2="466" y2="52.0" stroke="#868686" stroke-width="1"/>
<line x1="66" y1="42.0" x2="466" y2="42.0" stroke="#868686" stroke-width="1"/>
<line x1="66" y1="32.0" x2="466" y2="32.0" stroke="#868686" stroke-width="1"/>
<line x1="66" y1="30" x2="66" y2="136" stroke="#333" stroke-width="1.1"/>
<line x1="62" y1="132" x2="470" y2="132" stroke="#3a3a3a" stroke-width="1.6"/>
<path d="M62.5 30.5 L66 25.5 L69.5 30.5 Z" fill="#5e2424"/>
<path d="M469 129 L475 132 L469 135 Z" fill="#5e2424"/>
<text x="41" y="36" font-family="Liberation Mono" font-size="10.6" fill="#1e1e1e" xml:space="preserve">1.0</text>
<line x1="63" y1="32" x2="66" y2="32" stroke="#3a3a3a"/>
<text x="41" y="56" font-family="Liberation Mono" font-size="10.6" fill="#1e1e1e" xml:space="preserve">0.8</text>
<line x1="63" y1="52" x2="66" y2="52" stroke="#3a3a3a"/>
<text x="41" y="76" font-family="Liberation Mono" font-size="10.6" fill="#1e1e1e" xml:space="preserve">0.6</text>
<line x1="63" y1="72" x2="66" y2="72" stroke="#3a3a3a"/>
<text x="41" y="96" font-family="Liberation Mono" font-size="10.6" fill="#1e1e1e" xml:space="preserve">0.4</text>
<line x1="63" y1="92" x2="66" y2="92" stroke="#3a3a3a"/>
<text x="41" y="116" font-family="Liberation Mono" font-size="10.6" fill="#1e1e1e" xml:space="preserve">0.2</text>
<line x1="63" y1="112" x2="66" y2="112" stroke="#3a3a3a"/>
<text x="41" y="136" font-family="Liberation Mono" font-size="10.6" fill="#1e1e1e" xml:space="preserve">0.0</text>
<line x1="63" y1="132" x2="66" y2="132" stroke="#3a3a3a"/>
<text x="132.0" y="144" text-anchor="middle" font-family="Liberation Mono" font-size="10.6" fill="#1e1e1e">12:30</text>
<text x="198.7" y="144" text-anchor="middle" font-family="Liberation Mono" font-size="10.6" fill="#1e1e1e">12:40</text>
<text x="265.4" y="144" text-anchor="middle" font-family="Liberation Mono" font-size="10.6" fill="#1e1e1e">12:50</text>
<text x="332.1" y="144" text-anchor="middle" font-family="Liberation Mono" font-size="10.6" fill="#1e1e1e">13:00</text>
<text x="398.8" y="144" text-anchor="middle" font-family="Liberation Mono" font-size="10.6" fill="#1e1e1e">13:10</text>
<text x="247" y="17" text-anchor="middle" font-family="Liberation Mono" font-size="13.3" fill="#1e1e1e" xml:space="preserve">Diskspace (mnt)</text>
<text transform="translate(14 82) rotate(-90)" text-anchor="middle" font-family="Liberation Mono" font-size="11.6" fill="#1e1e1e">Bytes</text>
<text transform="translate(484.5 6) rotate(90)" font-family="Liberation Mono" font-size="9" fill="#6c6c6c" textLength="109" lengthAdjust="spacingAndGlyphs">RRDTOOL / TOBI OETIKER</text>
<line x1="495" y1="0" x2="495" y2="185" stroke="#666" stroke-width="2"/>
<rect x="14" y="153" width="9" height="9" fill="#1f9a1f" stroke="#2a2a2a" stroke-width="0.8"/>
<text x="29" y="162" font-family="Liberation Mono" font-size="11.3" fill="#1e1e1e">Free</text>
<text x="157" y="162" text-anchor="end" font-family="Liberation Mono" font-size="11.3" fill="#1e1e1e" xml:space="preserve">nan B Min,</text>
<text x="257" y="162" text-anchor="end" font-family="Liberation Mono" font-size="11.3" fill="#1e1e1e" xml:space="preserve">nan B Avg,</text>
<text x="357" y="162" text-anchor="end" font-family="Liberation Mono" font-size="11.3" fill="#1e1e1e" xml:space="preserve">nan B Max,</text>
<rect x="14" y="167" width="9" height="9" fill="#b0241a" stroke="#2a2a2a" stroke-width="0.8"/>
<text x="29" y="176" font-family="Liberation Mono" font-size="11.3" fill="#1e1e1e">Used</text>
<text x="157" y="176" text-anchor="end" font-family="Liberation Mono" font-size="11.3" fill="#1e1e1e" xml:space="preserve">nan B Min,</text>
<text x="257" y="176" text-anchor="end" font-family="Liberation Mono" font-size="11.3" fill="#1e1e1e" xml:space="preserve">nan B Avg,</text>
<text x="357" y="176" text-anchor="end" font-family="Liberation Mono" font-size="11.3" fill="#1e1e1e" xml:space="preserve">nan B Max,</text>
</svg>
<div class="a" style="left:276px;top:458px;width:496px;height:187px;background:#8f8f8f;border:1px solid #7b7b7b;border-top:2px solid #727272;border-bottom:2px solid #6e6e6e"></div>
<svg class="a" style="left:276px;top:459px" width="496" height="185" viewBox="0 0 496 185">
<line x1="77.4" y1="30" x2="77.4" y2="133" stroke="#878787" stroke-width="1"/>
<line x1="90.7" y1="30" x2="90.7" y2="133" stroke="#878787" stroke-width="1"/>
<line x1="104.0" y1="30" x2="104.0" y2="133" stroke="#878787" stroke-width="1"/>
<line x1="117.4" y1="30" x2="117.4" y2="133" stroke="#878787" stroke-width="1"/>
<line x1="130.7" y1="30" x2="130.7" y2="133" stroke="#7f7b7b" stroke-width="1"/>
<line x1="144.0" y1="30" x2="144.0" y2="133" stroke="#878787" stroke-width="1"/>
<line x1="157.4" y1="30" x2="157.4" y2="133" stroke="#878787" stroke-width="1"/>
<line x1="170.7" y1="30" x2="170.7" y2="133" stroke="#878787" stroke-width="1"/>
<line x1="184.0" y1="30" x2="184.0" y2="133" stroke="#878787" stroke-width="1"/>
<line x1="197.4" y1="30" x2="197.4" y2="133" stroke="#7f7b7b" stroke-width="1"/>
<line x1="210.7" y1="30" x2="210.7" y2="133" stroke="#878787" stroke-width="1"/>
<line x1="224.0" y1="30" x2="224.0" y2="133" stroke="#878787" stroke-width="1"/>
<line x1="237.4" y1="30" x2="237.4" y2="133" stroke="#878787" stroke-width="1"/>
<line x1="250.7" y1="30" x2="250.7" y2="133" stroke="#878787" stroke-width="1"/>
<line x1="264.0" y1="30" x2="264.0" y2="133" stroke="#7f7b7b" stroke-width="1"/>
<line x1="277.4" y1="30" x2="277.4" y2="133" stroke="#878787" stroke-width="1"/>
<line x1="290.7" y1="30" x2="290.7" y2="133" stroke="#878787" stroke-width="1"/>
<line x1="304.0" y1="30" x2="304.0" y2="133" stroke="#878787" stroke-width="1"/>
<line x1="317.4" y1="30" x2="317.4" y2="133" stroke="#878787" stroke-width="1"/>
<line x1="330.7" y1="30" x2="330.7" y2="133" stroke="#7f7b7b" stroke-width="1"/>
<line x1="344.0" y1="30" x2="344.0" y2="133" stroke="#878787" stroke-width="1"/>
<line x1="357.4" y1="30" x2="357.4" y2="133" stroke="#878787" stroke-width="1"/>
<line x1="370.7" y1="30" x2="370.7" y2="133" stroke="#878787" stroke-width="1"/>
<line x1="384.0" y1="30" x2="384.0" y2="133" stroke="#878787" stroke-width="1"/>
<line x1="397.4" y1="30" x2="397.4" y2="133" stroke="#7f7b7b" stroke-width="1"/>
<line x1="410.7" y1="30" x2="410.7" y2="133" stroke="#878787" stroke-width="1"/>
<line x1="424.0" y1="30" x2="424.0" y2="133" stroke="#878787" stroke-width="1"/>
<line x1="437.4" y1="30" x2="437.4" y2="133" stroke="#878787" stroke-width="1"/>
<line x1="450.7" y1="30" x2="450.7" y2="133" stroke="#878787" stroke-width="1"/>
<line x1="464.0" y1="30" x2="464.0" y2="133" stroke="#7f7b7b" stroke-width="1"/>
<line x1="66" y1="127.5" x2="466" y2="127.5" stroke="#878787" stroke-width="1"/>
<line x1="66" y1="122.0" x2="466" y2="122.0" stroke="#878787" stroke-width="1"/>
<line x1="66" y1="116.5" x2="466" y2="116.5" stroke="#878787" stroke-width="1"/>
<line x1="66" y1="111.0" x2="466" y2="111.0" stroke="#878787" stroke-width="1"/>
<line x1="66" y1="105.5" x2="466" y2="105.5" stroke="#878787" stroke-width="1"/>
<line x1="66" y1="100.0" x2="466" y2="100.0" stroke="#878787" stroke-width="1"/>
<line x1="66" y1="94.5" x2="466" y2="94.5" stroke="#878787" stroke-width="1"/>
<line x1="66" y1="89.0" x2="466" y2="89.0" stroke="#878787" stroke-width="1"/>
<line x1="66" y1="83.5" x2="466" y2="83.5" stroke="#878787" stroke-width="1"/>
<line x1="66" y1="78.0" x2="466" y2="78.0" stroke="#878787" stroke-width="1"/>
<line x1="66" y1="72.5" x2="466" y2="72.5" stroke="#878787" stroke-width="1"/>
<line x1="66" y1="67.0" x2="466" y2="67.0" stroke="#878787" stroke-width="1"/>
<line x1="66" y1="61.5" x2="466" y2="61.5" stroke="#878787" stroke-width="1"/>
<line x1="66" y1="56.0" x2="466" y2="56.0" stroke="#878787" stroke-width="1"/>
<line x1="66" y1="50.5" x2="466" y2="50.5" stroke="#878787" stroke-width="1"/>
<line x1="66" y1="45.0" x2="466" y2="45.0" stroke="#878787" stroke-width="1"/>
<line x1="66" y1="39.5" x2="466" y2="39.5" stroke="#878787" stroke-width="1"/>
<line x1="66" y1="34.0" x2="466" y2="34.0" stroke="#878787" stroke-width="1"/>
<rect x="66" y="33" width="388" height="100" fill="#6c8d70"/>
<line x1="77.4" y1="35" x2="77.4" y2="133" stroke="#67876a" stroke-width="1"/>
<line x1="90.7" y1="35" x2="90.7" y2="133" stroke="#67876a" stroke-width="1"/>
<line x1="104.0" y1="35" x2="104.0" y2="133" stroke="#67876a" stroke-width="1"/>
<line x1="117.4" y1="35" x2="117.4" y2="133" stroke="#67876a" stroke-width="1"/>
<line x1="130.7" y1="35" x2="130.7" y2="133" stroke="#5e7f62" stroke-width="1"/>
<line x1="144.0" y1="35" x2="144.0" y2="133" stroke="#67876a" stroke-width="1"/>
<line x1="157.4" y1="35" x2="157.4" y2="133" stroke="#67876a" stroke-width="1"/>
<line x1="170.7" y1="35" x2="170.7" y2="133" stroke="#67876a" stroke-width="1"/>
<line x1="184.0" y1="35" x2="184.0" y2="133" stroke="#67876a" stroke-width="1"/>
<line x1="197.4" y1="35" x2="197.4" y2="133" stroke="#5e7f62" stroke-width="1"/>
<line x1="210.7" y1="35" x2="210.7" y2="133" stroke="#67876a" stroke-width="1"/>
<line x1="224.0" y1="35" x2="224.0" y2="133" stroke="#67876a" stroke-width="1"/>
<line x1="237.4" y1="35" x2="237.4" y2="133" stroke="#67876a" stroke-width="1"/>
<line x1="250.7" y1="35" x2="250.7" y2="133" stroke="#67876a" stroke-width="1"/>
<line x1="264.0" y1="35" x2="264.0" y2="133" stroke="#5e7f62" stroke-width="1"/>
<line x1="277.4" y1="35" x2="277.4" y2="133" stroke="#67876a" stroke-width="1"/>
<line x1="290.7" y1="35" x2="290.7" y2="133" stroke="#67876a" stroke-width="1"/>
<line x1="304.0" y1="35" x2="304.0" y2="133" stroke="#67876a" stroke-width="1"/>
<line x1="317.4" y1="35" x2="317.4" y2="133" stroke="#67876a" stroke-width="1"/>
<line x1="330.7" y1="35" x2="330.7" y2="133" stroke="#5e7f62" stroke-width="1"/>
<line x1="344.0" y1="35" x2="344.0" y2="133" stroke="#67876a" stroke-width="1"/>
<line x1="357.4" y1="35" x2="357.4" y2="133" stroke="#67876a" stroke-width="1"/>
<line x1="370.7" y1="35" x2="370.7" y2="133" stroke="#67876a" stroke-width="1"/>
<line x1="384.0" y1="35" x2="384.0" y2="133" stroke="#67876a" stroke-width="1"/>
<line x1="397.4" y1="35" x2="397.4" y2="133" stroke="#5e7f62" stroke-width="1"/>
<line x1="410.7" y1="35" x2="410.7" y2="133" stroke="#67876a" stroke-width="1"/>
<line x1="424.0" y1="35" x2="424.0" y2="133" stroke="#67876a" stroke-width="1"/>
<line x1="437.4" y1="35" x2="437.4" y2="133" stroke="#67876a" stroke-width="1"/>
<line x1="450.7" y1="35" x2="450.7" y2="133" stroke="#67876a" stroke-width="1"/>
<line x1="66" y1="127.5" x2="454" y2="127.5" stroke="#67876a" stroke-width="1"/>
<line x1="66" y1="122.0" x2="454" y2="122.0" stroke="#67876a" stroke-width="1"/>
<line x1="66" y1="116.5" x2="454" y2="116.5" stroke="#67876a" stroke-width="1"/>
<line x1="66" y1="111.0" x2="454" y2="111.0" stroke="#67876a" stroke-width="1"/>
<line x1="66" y1="105.5" x2="454" y2="105.5" stroke="#67876a" stroke-width="1"/>
<line x1="66" y1="100.0" x2="454" y2="100.0" stroke="#67876a" stroke-width="1"/>
<line x1="66" y1="94.5" x2="454" y2="94.5" stroke="#67876a" stroke-width="1"/>
<line x1="66" y1="89.0" x2="454" y2="89.0" stroke="#67876a" stroke-width="1"/>
<line x1="66" y1="83.5" x2="454" y2="83.5" stroke="#67876a" stroke-width="1"/>
<line x1="66" y1="78.0" x2="454" y2="78.0" stroke="#67876a" stroke-width="1"/>
<line x1="66" y1="72.5" x2="454" y2="72.5" stroke="#67876a" stroke-width="1"/>
<line x1="66" y1="67.0" x2="454" y2="67.0" stroke="#67876a" stroke-width="1"/>
<line x1="66" y1="61.5" x2="454" y2="61.5" stroke="#67876a" stroke-width="1"/>
<line x1="66" y1="56.0" x2="454" y2="56.0" stroke="#67876a" stroke-width="1"/>
<line x1="66" y1="50.5" x2="454" y2="50.5" stroke="#67876a" stroke-width="1"/>
<line x1="66" y1="45.0" x2="454" y2="45.0" stroke="#67876a" stroke-width="1"/>
<line x1="66" y1="39.5" x2="454" y2="39.5" stroke="#67876a" stroke-width="1"/>
<line x1="66" y1="33.6" x2="454" y2="33.6" stroke="#2f7f2f" stroke-width="1.8"/>
<line x1="66" y1="30" x2="66" y2="137" stroke="#333" stroke-width="1.1"/>
<line x1="62" y1="133" x2="470" y2="133" stroke="#3a3a3a" stroke-width="1.6"/>
<path d="M62.5 30.5 L66 25.5 L69.5 30.5 Z" fill="#5e2424"/>
<path d="M469 130 L475 133 L469 136 Z" fill="#5e2424"/>
<text x="29" y="54" font-family="Liberation Mono" font-size="10.6" fill="#1e1e1e" xml:space="preserve">1.5 T</text>
<line x1="63" y1="50" x2="66" y2="50" stroke="#3a3a3a"/>
<text x="29" y="81" font-family="Liberation Mono" font-size="10.6" fill="#1e1e1e" xml:space="preserve">1.0 T</text>
<line x1="63" y1="77" x2="66" y2="77" stroke="#3a3a3a"/>
<text x="29" y="109" font-family="Liberation Mono" font-size="10.6" fill="#1e1e1e" xml:space="preserve">0.5 T</text>
<line x1="63" y1="105" x2="66" y2="105" stroke="#3a3a3a"/>
<text x="29" y="137" font-family="Liberation Mono" font-size="10.6" fill="#1e1e1e" xml:space="preserve">0.0</text>
<line x1="63" y1="133" x2="66" y2="133" stroke="#3a3a3a"/>
<text x="132.0" y="145" text-anchor="middle" font-family="Liberation Mono" font-size="10.6" fill="#1e1e1e">12:30</text>
<text x="198.7" y="145" text-anchor="middle" font-family="Liberation Mono" font-size="10.6" fill="#1e1e1e">12:40</text>
<text x="265.4" y="145" text-anchor="middle" font-family="Liberation Mono" font-size="10.6" fill="#1e1e1e">12:50</text>
<text x="332.1" y="145" text-anchor="middle" font-family="Liberation Mono" font-size="10.6" fill="#1e1e1e">13:00</text>
<text x="398.8" y="145" text-anchor="middle" font-family="Liberation Mono" font-size="10.6" fill="#1e1e1e">13:10</text>
<text x="247" y="17" text-anchor="middle" font-family="Liberation Mono" font-size="13.3" fill="#1e1e1e" xml:space="preserve">Diskspace (Volume1)</text>
<text transform="translate(14 82) rotate(-90)" text-anchor="middle" font-family="Liberation Mono" font-size="11.6" fill="#1e1e1e">Bytes</text>
<text transform="translate(484.5 6) rotate(90)" font-family="Liberation Mono" font-size="9" fill="#6c6c6c" textLength="109" lengthAdjust="spacingAndGlyphs">RRDTOOL / TOBI OETIKER</text>
<line x1="495" y1="0" x2="495" y2="185" stroke="#666" stroke-width="2"/>
<rect x="14" y="153" width="9" height="9" fill="#1f9a1f" stroke="#2a2a2a" stroke-width="0.8"/>
<text x="29" y="162" font-family="Liberation Mono" font-size="11.3" fill="#1e1e1e">Free</text>
<text x="157" y="162" text-anchor="end" font-family="Liberation Mono" font-size="11.3" fill="#1e1e1e" xml:space="preserve">1.8TB Min,</text>
<text x="257" y="162" text-anchor="end" font-family="Liberation Mono" font-size="11.3" fill="#1e1e1e" xml:space="preserve">1.8TB Avg,</text>
<text x="357" y="162" text-anchor="end" font-family="Liberation Mono" font-size="11.3" fill="#1e1e1e" xml:space="preserve">1.8TB Max,</text>
<rect x="14" y="167" width="9" height="9" fill="#b0241a" stroke="#2a2a2a" stroke-width="0.8"/>
<text x="29" y="176" font-family="Liberation Mono" font-size="11.3" fill="#1e1e1e">Used</text>
<text x="157" y="176" text-anchor="end" font-family="Liberation Mono" font-size="11.3" fill="#1e1e1e" xml:space="preserve">8.2GB Min,</text>
<text x="257" y="176" text-anchor="end" font-family="Liberation Mono" font-size="11.3" fill="#1e1e1e" xml:space="preserve">8.2GB Avg,</text>
<text x="357" y="176" text-anchor="end" font-family="Liberation Mono" font-size="11.3" fill="#1e1e1e" xml:space="preserve">8.2GB Max,</text>
</svg>
<div class="a" style="left:276px;top:645px;width:496px;height:187px;background:#8f8f8f;border:1px solid #7b7b7b;border-top:2px solid #727272;border-bottom:2px solid #6e6e6e"></div>
<svg class="a" style="left:276px;top:646px" width="496" height="185" viewBox="0 0 496 185">
<line x1="77.4" y1="30" x2="77.4" y2="133" stroke="#878787" stroke-width="1"/>
<line x1="90.7" y1="30" x2="90.7" y2="133" stroke="#878787" stroke-width="1"/>
<line x1="104.0" y1="30" x2="104.0" y2="133" stroke="#878787" stroke-width="1"/>
<line x1="117.4" y1="30" x2="117.4" y2="133" stroke="#878787" stroke-width="1"/>
<line x1="130.7" y1="30" x2="130.7" y2="133" stroke="#7f7b7b" stroke-width="1"/>
<line x1="144.0" y1="30" x2="144.0" y2="133" stroke="#878787" stroke-width="1"/>
<line x1="157.4" y1="30" x2="157.4" y2="133" stroke="#878787" stroke-width="1"/>
<line x1="170.7" y1="30" x2="170.7" y2="133" stroke="#878787" stroke-width="1"/>
<line x1="184.0" y1="30" x2="184.0" y2="133" stroke="#878787" stroke-width="1"/>
<line x1="197.4" y1="30" x2="197.4" y2="133" stroke="#7f7b7b" stroke-width="1"/>
<line x1="210.7" y1="30" x2="210.7" y2="133" stroke="#878787" stroke-width="1"/>
<line x1="224.0" y1="30" x2="224.0" y2="133" stroke="#878787" stroke-width="1"/>
<line x1="237.4" y1="30" x2="237.4" y2="133" stroke="#878787" stroke-width="1"/>
<line x1="250.7" y1="30" x2="250.7" y2="133" stroke="#878787" stroke-width="1"/>
<line x1="264.0" y1="30" x2="264.0" y2="133" stroke="#7f7b7b" stroke-width="1"/>
<line x1="277.4" y1="30" x2="277.4" y2="133" stroke="#878787" stroke-width="1"/>
<line x1="290.7" y1="30" x2="290.7" y2="133" stroke="#878787" stroke-width="1"/>
<line x1="304.0" y1="30" x2="304.0" y2="133" stroke="#878787" stroke-width="1"/>
<line x1="317.4" y1="30" x2="317.4" y2="133" stroke="#878787" stroke-width="1"/>
<line x1="330.7" y1="30" x2="330.7" y2="133" stroke="#7f7b7b" stroke-width="1"/>
<line x1="344.0" y1="30" x2="344.0" y2="133" stroke="#878787" stroke-width="1"/>
<line x1="357.4" y1="30" x2="357.4" y2="133" stroke="#878787" stroke-width="1"/>
<line x1="370.7" y1="30" x2="370.7" y2="133" stroke="#878787" stroke-width="1"/>
<line x1="384.0" y1="30" x2="384.0" y2="133" stroke="#878787" stroke-width="1"/>
<line x1="397.4" y1="30" x2="397.4" y2="133" stroke="#7f7b7b" stroke-width="1"/>
<line x1="410.7" y1="30" x2="410.7" y2="133" stroke="#878787" stroke-width="1"/>
<line x1="424.0" y1="30" x2="424.0" y2="133" stroke="#878787" stroke-width="1"/>
<line x1="437.4" y1="30" x2="437.4" y2="133" stroke="#878787" stroke-width="1"/>
<line x1="450.7" y1="30" x2="450.7" y2="133" stroke="#878787" stroke-width="1"/>
<line x1="464.0" y1="30" x2="464.0" y2="133" stroke="#7f7b7b" stroke-width="1"/>
<line x1="66" y1="127.5" x2="466" y2="127.5" stroke="#878787" stroke-width="1"/>
<line x1="66" y1="122.0" x2="466" y2="122.0" stroke="#878787" stroke-width="1"/>
<line x1="66" y1="116.5" x2="466" y2="116.5" stroke="#878787" stroke-width="1"/>
<line x1="66" y1="111.0" x2="466" y2="111.0" stroke="#878787" stroke-width="1"/>
<line x1="66" y1="105.5" x2="466" y2="105.5" stroke="#878787" stroke-width="1"/>
<line x1="66" y1="100.0" x2="466" y2="100.0" stroke="#878787" stroke-width="1"/>
<line x1="66" y1="94.5" x2="466" y2="94.5" stroke="#878787" stroke-width="1"/>
<line x1="66" y1="89.0" x2="466" y2="89.0" stroke="#878787" stroke-width="1"/>
<line x1="66" y1="83.5" x2="466" y2="83.5" stroke="#878787" stroke-width="1"/>
<line x1="66" y1="78.0" x2="466" y2="78.0" stroke="#878787" stroke-width="1"/>
<line x1="66" y1="72.5" x2="466" y2="72.5" stroke="#878787" stroke-width="1"/>
<line x1="66" y1="67.0" x2="466" y2="67.0" stroke="#878787" stroke-width="1"/>
<line x1="66" y1="61.5" x2="466" y2="61.5" stroke="#878787" stroke-width="1"/>
<line x1="66" y1="56.0" x2="466" y2="56.0" stroke="#878787" stroke-width="1"/>
<line x1="66" y1="50.5" x2="466" y2="50.5" stroke="#878787" stroke-width="1"/>
<line x1="66" y1="45.0" x2="466" y2="45.0" stroke="#878787" stroke-width="1"/>
<line x1="66" y1="39.5" x2="466" y2="39.5" stroke="#878787" stroke-width="1"/>
<line x1="66" y1="34.0" x2="466" y2="34.0" stroke="#878787" stroke-width="1"/>
<rect x="66" y="33" width="388" height="100" fill="#6c8d70"/>
<line x1="77.4" y1="35" x2="77.4" y2="133" stroke="#67876a" stroke-width="1"/>
<line x1="90.7" y1="35" x2="90.7" y2="133" stroke="#67876a" stroke-width="1"/>
<line x1="104.0" y1="35" x2="104.0" y2="133" stroke="#67876a" stroke-width="1"/>
<line x1="117.4" y1="35" x2="117.4" y2="133" stroke="#67876a" stroke-width="1"/>
<line x1="130.7" y1="35" x2="130.7" y2="133" stroke="#5e7f62" stroke-width="1"/>
<line x1="144.0" y1="35" x2="144.0" y2="133" stroke="#67876a" stroke-width="1"/>
<line x1="157.4" y1="35" x2="157.4" y2="133" stroke="#67876a" stroke-width="1"/>
<line x1="170.7" y1="35" x2="170.7" y2="133" stroke="#67876a" stroke-width="1"/>
<line x1="184.0" y1="35" x2="184.0" y2="133" stroke="#67876a" stroke-width="1"/>
<line x1="197.4" y1="35" x2="197.4" y2="133" stroke="#5e7f62" stroke-width="1"/>
<line x1="210.7" y1="35" x2="210.7" y2="133" stroke="#67876a" stroke-width="1"/>
<line x1="224.0" y1="35" x2="224.0" y2="133" stroke="#67876a" stroke-width="1"/>
<line x1="237.4" y1="35" x2="237.4" y2="133" stroke="#67876a" stroke-width="1"/>
<line x1="250.7" y1="35" x2="250.7" y2="133" stroke="#67876a" stroke-width="1"/>
<line x1="264.0" y1="35" x2="264.0" y2="133" stroke="#5e7f62" stroke-width="1"/>
<line x1="277.4" y1="35" x2="277.4" y2="133" stroke="#67876a" stroke-width="1"/>
<line x1="290.7" y1="35" x2="290.7" y2="133" stroke="#67876a" stroke-width="1"/>
<line x1="304.0" y1="35" x2="304.0" y2="133" stroke="#67876a" stroke-width="1"/>
<line x1="317.4" y1="35" x2="317.4" y2="133" stroke="#67876a" stroke-width="1"/>
<line x1="330.7" y1="35" x2="330.7" y2="133" stroke="#5e7f62" stroke-width="1"/>
<line x1="344.0" y1="35" x2="344.0" y2="133" stroke="#67876a" stroke-width="1"/>
<line x1="357.4" y1="35" x2="357.4" y2="133" stroke="#67876a" stroke-width="1"/>
<line x1="370.7" y1="35" x2="370.7" y2="133" stroke="#67876a" stroke-width="1"/>
<line x1="384.0" y1="35" x2="384.0" y2="133" stroke="#67876a" stroke-width="1"/>
<line x1="397.4" y1="35" x2="397.4" y2="133" stroke="#5e7f62" stroke-width="1"/>
<line x1="410.7" y1="35" x2="410.7" y2="133" stroke="#67876a" stroke-width="1"/>
<line x1="424.0" y1="35" x2="424.0" y2="133" stroke="#67876a" stroke-width="1"/>
<line x1="437.4" y1="35" x2="437.4" y2="133" stroke="#67876a" stroke-width="1"/>
<line x1="450.7" y1="35" x2="450.7" y2="133" stroke="#67876a" stroke-width="1"/>
<line x1="66" y1="127.5" x2="454" y2="127.5" stroke="#67876a" stroke-width="1"/>
<line x1="66" y1="122.0" x2="454" y2="122.0" stroke="#67876a" stroke-width="1"/>
<line x1="66" y1="116.5" x2="454" y2="116.5" stroke="#67876a" stroke-width="1"/>
<line x1="66" y1="111.0" x2="454" y2="111.0" stroke="#67876a" stroke-width="1"/>
<line x1="66" y1="105.5" x2="454" y2="105.5" stroke="#67876a" stroke-width="1"/>
<line x1="66" y1="100.0" x2="454" y2="100.0" stroke="#67876a" stroke-width="1"/>
<line x1="66" y1="94.5" x2="454" y2="94.5" stroke="#67876a" stroke-width="1"/>
<line x1="66" y1="89.0" x2="454" y2="89.0" stroke="#67876a" stroke-width="1"/>
<line x1="66" y1="83.5" x2="454" y2="83.5" stroke="#67876a" stroke-width="1"/>
<line x1="66" y1="78.0" x2="454" y2="78.0" stroke="#67876a" stroke-width="1"/>
<line x1="66" y1="72.5" x2="454" y2="72.5" stroke="#67876a" stroke-width="1"/>
<line x1="66" y1="67.0" x2="454" y2="67.0" stroke="#67876a" stroke-width="1"/>
<line x1="66" y1="61.5" x2="454" y2="61.5" stroke="#67876a" stroke-width="1"/>
<line x1="66" y1="56.0" x2="454" y2="56.0" stroke="#67876a" stroke-width="1"/>
<line x1="66" y1="50.5" x2="454" y2="50.5" stroke="#67876a" stroke-width="1"/>
<line x1="66" y1="45.0" x2="454" y2="45.0" stroke="#67876a" stroke-width="1"/>
<line x1="66" y1="39.5" x2="454" y2="39.5" stroke="#67876a" stroke-width="1"/>
<line x1="66" y1="33.6" x2="454" y2="33.6" stroke="#2f7f2f" stroke-width="1.8"/>
<line x1="66" y1="30" x2="66" y2="137" stroke="#333" stroke-width="1.1"/>
<line x1="62" y1="133" x2="470" y2="133" stroke="#3a3a3a" stroke-width="1.6"/>
<path d="M62.5 30.5 L66 25.5 L69.5 30.5 Z" fill="#5e2424"/>
<path d="M469 130 L475 133 L469 136 Z" fill="#5e2424"/>
<text x="29" y="54" font-family="Liberation Mono" font-size="10.6" fill="#1e1e1e" xml:space="preserve">1.5 T</text>
<line x1="63" y1="50" x2="66" y2="50" stroke="#3a3a3a"/>
<text x="29" y="81" font-family="Liberation Mono" font-size="10.6" fill="#1e1e1e" xml:space="preserve">1.0 T</text>
<line x1="63" y1="77" x2="66" y2="77" stroke="#3a3a3a"/>
<text x="29" y="109" font-family="Liberation Mono" font-size="10.6" fill="#1e1e1e" xml:space="preserve">0.5 T</text>
<line x1="63" y1="105" x2="66" y2="105" stroke="#3a3a3a"/>
<text x="29" y="137" font-family="Liberation Mono" font-size="10.6" fill="#1e1e1e" xml:space="preserve">0.0</text>
<line x1="63" y1="133" x2="66" y2="133" stroke="#3a3a3a"/>
<text x="132.0" y="145" text-anchor="middle" font-family="Liberation Mono" font-size="10.6" fill="#1e1e1e">12:30</text>
<text x="198.7" y="145" text-anchor="middle" font-family="Liberation Mono" font-size="10.6" fill="#1e1e1e">12:40</text>
<text x="265.4" y="145" text-anchor="middle" font-family="Liberation Mono" font-size="10.6" fill="#1e1e1e">12:50</text>
<text x="332.1" y="145" text-anchor="middle" font-family="Liberation Mono" font-size="10.6" fill="#1e1e1e">13:00</text>
<text x="398.8" y="145" text-anchor="middle" font-family="Liberation Mono" font-size="10.6" fill="#1e1e1e">13:10</text>
<text x="247" y="17" text-anchor="middle" font-family="Liberation Mono" font-size="13.3" fill="#1e1e1e" xml:space="preserve">Diskspace (Volume1-.system)</text>
<text transform="translate(14 82) rotate(-90)" text-anchor="middle" font-family="Liberation Mono" font-size="11.6" fill="#1e1e1e">Bytes</text>
<text transform="translate(484.5 6) rotate(90)" font-family="Liberation Mono" font-size="9" fill="#6c6c6c" textLength="109" lengthAdjust="spacingAndGlyphs">RRDTOOL / TOBI OETIKER</text>
<line x1="495" y1="0" x2="495" y2="185" stroke="#666" stroke-width="2"/>
<rect x="14" y="153" width="9" height="9" fill="#1f9a1f" stroke="#2a2a2a" stroke-width="0.8"/>
<text x="29" y="162" font-family="Liberation Mono" font-size="11.3" fill="#1e1e1e">Free</text>
<text x="157" y="162" text-anchor="end" font-family="Liberation Mono" font-size="11.3" fill="#1e1e1e" xml:space="preserve">1.8TB Min,</text>
<text x="257" y="162" text-anchor="end" font-family="Liberation Mono" font-size="11.3" fill="#1e1e1e" xml:space="preserve">1.8TB Avg,</text>
<text x="357" y="162" text-anchor="end" font-family="Liberation Mono" font-size="11.3" fill="#1e1e1e" xml:space="preserve">1.8TB Max,</text>
<text x="457" y="162" text-anchor="end" font-family="Liberation Mono" font-size="11.3" fill="#1e1e1e" xml:space="preserve">1.8TB Last</text>
<rect x="14" y="167" width="9" height="9" fill="#b0241a" stroke="#2a2a2a" stroke-width="0.8"/>
<text x="29" y="176" font-family="Liberation Mono" font-size="11.3" fill="#1e1e1e">Used</text>
<text x="157" y="176" text-anchor="end" font-family="Liberation Mono" font-size="11.3" fill="#1e1e1e" xml:space="preserve">168.0kB Min,</text>
<text x="257" y="176" text-anchor="end" font-family="Liberation Mono" font-size="11.3" fill="#1e1e1e" xml:space="preserve">168.0kB Avg,</text>
<text x="357" y="176" text-anchor="end" font-family="Liberation Mono" font-size="11.3" fill="#1e1e1e" xml:space="preserve">168.0kB Max,</text>
<text x="457" y="176" text-anchor="end" font-family="Liberation Mono" font-size="11.3" fill="#1e1e1e" xml:space="preserve">168.0kB Last</text>
</svg>
<div class="a" style="left:276px;top:832px;width:496px;height:187px;background:#8f8f8f;border:1px solid #7b7b7b;border-top:2px solid #727272;border-bottom:2px solid #6e6e6e"></div>
<svg class="a" style="left:276px;top:833px" width="496" height="185" viewBox="0 0 496 185">
<line x1="77.4" y1="30" x2="77.4" y2="133" stroke="#878787" stroke-width="1"/>
<line x1="90.7" y1="30" x2="90.7" y2="133" stroke="#878787" stroke-width="1"/>
<line x1="104.0" y1="30" x2="104.0" y2="133" stroke="#878787" stroke-width="1"/>
<line x1="117.4" y1="30" x2="117.4" y2="133" stroke="#878787" stroke-width="1"/>
<line x1="130.7" y1="30" x2="130.7" y2="133" stroke="#7f7b7b" stroke-width="1"/>
<line x1="144.0" y1="30" x2="144.0" y2="133" stroke="#878787" stroke-width="1"/>
<line x1="157.4" y1="30" x2="157.4" y2="133" stroke="#878787" stroke-width="1"/>
<line x1="170.7" y1="30" x2="170.7" y2="133" stroke="#878787" stroke-width="1"/>
<line x1="184.0" y1="30" x2="184.0" y2="133" stroke="#878787" stroke-width="1"/>
<line x1="197.4" y1="30" x2="197.4" y2="133" stroke="#7f7b7b" stroke-width="1"/>
<line x1="210.7" y1="30" x2="210.7" y2="133" stroke="#878787" stroke-width="1"/>
<line x1="224.0" y1="30" x2="224.0" y2="133" stroke="#878787" stroke-width="1"/>
<line x1="237.4" y1="30" x2="237.4" y2="133" stroke="#878787" stroke-width="1"/>
<line x1="250.7" y1="30" x2="250.7" y2="133" stroke="#878787" stroke-width="1"/>
<line x1="264.0" y1="30" x2="264.0" y2="133" stroke="#7f7b7b" stroke-width="1"/>
<line x1="277.4" y1="30" x2="277.4" y2="133" stroke="#878787" stroke-width="1"/>
<line x1="290.7" y1="30" x2="290.7" y2="133" stroke="#878787" stroke-width="1"/>
<line x1="304.0" y1="30" x2="304.0" y2="133" stroke="#878787" stroke-width="1"/>
<line x1="317.4" y1="30" x2="317.4" y2="133" stroke="#878787" stroke-width="1"/>
<line x1="330.7" y1="30" x2="330.7" y2="133" stroke="#7f7b7b" stroke-width="1"/>
<line x1="344.0" y1="30" x2="344.0" y2="133" stroke="#878787" stroke-width="1"/>
<line x1="357.4" y1="30" x2="357.4" y2="133" stroke="#878787" stroke-width="1"/>
<line x1="370.7" y1="30" x2="370.7" y2="133" stroke="#878787" stroke-width="1"/>
<line x1="384.0" y1="30" x2="384.0" y2="133" stroke="#878787" stroke-width="1"/>
<line x1="397.4" y1="30" x2="397.4" y2="133" stroke="#7f7b7b" stroke-width="1"/>
<line x1="410.7" y1="30" x2="410.7" y2="133" stroke="#878787" stroke-width="1"/>
<line x1="424.0" y1="30" x2="424.0" y2="133" stroke="#878787" stroke-width="1"/>
<line x1="437.4" y1="30" x2="437.4" y2="133" stroke="#878787" stroke-width="1"/>
<line x1="450.7" y1="30" x2="450.7" y2="133" stroke="#878787" stroke-width="1"/>
<line x1="464.0" y1="30" x2="464.0" y2="133" stroke="#7f7b7b" stroke-width="1"/>
<line x1="66" y1="127.5" x2="466" y2="127.5" stroke="#878787" stroke-width="1"/>
<line x1="66" y1="122.0" x2="466" y2="122.0" stroke="#878787" stroke-width="1"/>
<line x1="66" y1="116.5" x2="466" y2="116.5" stroke="#878787" stroke-width="1"/>
<line x1="66" y1="111.0" x2="466" y2="111.0" stroke="#878787" stroke-width="1"/>
<line x1="66" y1="105.5" x2="466" y2="105.5" stroke="#878787" stroke-width="1"/>
<line x1="66" y1="100.0" x2="466" y2="100.0" stroke="#878787" stroke-width="1"/>
<line x1="66" y1="94.5" x2="466" y2="94.5" stroke="#878787" stroke-width="1"/>
<line x1="66" y1="89.0" x2="466" y2="89.0" stroke="#878787" stroke-width="1"/>
<line x1="66" y1="83.5" x2="466" y2="83.5" stroke="#878787" stroke-width="1"/>
<line x1="66" y1="78.0" x2="466" y2="78.0" stroke="#878787" stroke-width="1"/>
<line x1="66" y1="72.5" x2="466" y2="72.5" stroke="#878787" stroke-width="1"/>
<line x1="66" y1="67.0" x2="466" y2="67.0" stroke="#878787" stroke-width="1"/>
<line x1="66" y1="61.5" x2="466" y2="61.5" stroke="#878787" stroke-width="1"/>
<line x1="66" y1="56.0" x2="466" y2="56.0" stroke="#878787" stroke-width="1"/>
<line x1="66" y1="50.5" x2="466" y2="50.5" stroke="#878787" stroke-width="1"/>
<line x1="66" y1="45.0" x2="466" y2="45.0" stroke="#878787" stroke-width="1"/>
<line x1="66" y1="39.5" x2="466" y2="39.5" stroke="#878787" stroke-width="1"/>
<line x1="66" y1="34.0" x2="466" y2="34.0" stroke="#878787" stroke-width="1"/>
<rect x="66" y="33" width="388" height="100" fill="#6c8d70"/>
<line x1="77.4" y1="35" x2="77.4" y2="133" stroke="#67876a" stroke-width="1"/>
<line x1="90.7" y1="35" x2="90.7" y2="133" stroke="#67876a" stroke-width="1"/>
<line x1="104.0" y1="35" x2="104.0" y2="133" stroke="#67876a" stroke-width="1"/>
<line x1="117.4" y1="35" x2="117.4" y2="133" stroke="#67876a" stroke-width="1"/>
<line x1="130.7" y1="35" x2="130.7" y2="133" stroke="#5e7f62" stroke-width="1"/>
<line x1="144.0" y1="35" x2="144.0" y2="133" stroke="#67876a" stroke-width="1"/>
<line x1="157.4" y1="35" x2="157.4" y2="133" stroke="#67876a" stroke-width="1"/>
<line x1="170.7" y1="35" x2="170.7" y2="133" stroke="#67876a" stroke-width="1"/>
<line x1="184.0" y1="35" x2="184.0" y2="133" stroke="#67876a" stroke-width="1"/>
<line x1="197.4" y1="35" x2="197.4" y2="133" stroke="#5e7f62" stroke-width="1"/>
<line x1="210.7" y1="35" x2="210.7" y2="133" stroke="#67876a" stroke-width="1"/>
<line x1="224.0" y1="35" x2="224.0" y2="133" stroke="#67876a" stroke-width="1"/>
<line x1="237.4" y1="35" x2="237.4" y2="133" stroke="#67876a" stroke-width="1"/>
<line x1="250.7" y1="35" x2="250.7" y2="133" stroke="#67876a" stroke-width="1"/>
<line x1="264.0" y1="35" x2="264.0" y2="133" stroke="#5e7f62" stroke-width="1"/>
<line x1="277.4" y1="35" x2="277.4" y2="133" stroke="#67876a" stroke-width="1"/>
<line x1="290.7" y1="35" x2="290.7" y2="133" stroke="#67876a" stroke-width="1"/>
<line x1="304.0" y1="35" x2="304.0" y2="133" stroke="#67876a" stroke-width="1"/>
<line x1="317.4" y1="35" x2="317.4" y2="133" stroke="#67876a" stroke-width="1"/>
<line x1="330.7" y1="35" x2="330.7" y2="133" stroke="#5e7f62" stroke-width="1"/>
<line x1="344.0" y1="35" x2="344.0" y2="133" stroke="#67876a" stroke-width="1"/>
<line x1="357.4" y1="35" x2="357.4" y2="133" stroke="#67876a" stroke-width="1"/>
<line x1="370.7" y1="35" x2="370.7" y2="133" stroke="#67876a" stroke-width="1"/>
<line x1="384.0" y1="35" x2="384.0" y2="133" stroke="#67876a" stroke-width="1"/>
<line x1="397.4" y1="35" x2="397.4" y2="133" stroke="#5e7f62" stroke-width="1"/>
<line x1="410.7" y1="35" x2="410.7" y2="133" stroke="#67876a" stroke-width="1"/>
<line x1="424.0" y1="35" x2="424.0" y2="133" stroke="#67876a" stroke-width="1"/>
<line x1="437.4" y1="35" x2="437.4" y2="133" stroke="#67876a" stroke-width="1"/>
<line x1="450.7" y1="35" x2="450.7" y2="133" stroke="#67876a" stroke-width="1"/>
<line x1="66" y1="127.5" x2="454" y2="127.5" stroke="#67876a" stroke-width="1"/>
<line x1="66" y1="122.0" x2="454" y2="122.0" stroke="#67876a" stroke-width="1"/>
<line x1="66" y1="116.5" x2="454" y2="116.5" stroke="#67876a" stroke-width="1"/>
<line x1="66" y1="111.0" x2="454" y2="111.0" stroke="#67876a" stroke-width="1"/>
<line x1="66" y1="105.5" x2="454" y2="105.5" stroke="#67876a" stroke-width="1"/>
<line x1="66" y1="100.0" x2="454" y2="100.0" stroke="#67876a" stroke-width="1"/>
<line x1="66" y1="94.5" x2="454" y2="94.5" stroke="#67876a" stroke-width="1"/>
<line x1="66" y1="89.0" x2="454" y2="89.0" stroke="#67876a" stroke-width="1"/>
<line x1="66" y1="83.5" x2="454" y2="83.5" stroke="#67876a" stroke-width="1"/>
<line x1="66" y1="78.0" x2="454" y2="78.0" stroke="#67876a" stroke-width="1"/>
<line x1="66" y1="72.5" x2="454" y2="72.5" stroke="#67876a" stroke-width="1"/>
<line x1="66" y1="67.0" x2="454" y2="67.0" stroke="#67876a" stroke-width="1"/>
<line x1="66" y1="61.5" x2="454" y2="61.5" stroke="#67876a" stroke-width="1"/>
<line x1="66" y1="56.0" x2="454" y2="56.0" stroke="#67876a" stroke-width="1"/>
<line x1="66" y1="50.5" x2="454" y2="50.5" stroke="#67876a" stroke-width="1"/>
<line x1="66" y1="45.0" x2="454" y2="45.0" stroke="#67876a" stroke-width="1"/>
<line x1="66" y1="39.5" x2="454" y2="39.5" stroke="#67876a" stroke-width="1"/>
<line x1="66" y1="33.6" x2="454" y2="33.6" stroke="#2f7f2f" stroke-width="1.8"/>
<line x1="66" y1="30" x2="66" y2="137" stroke="#333" stroke-width="1.1"/>
<line x1="62" y1="133" x2="470" y2="133" stroke="#3a3a3a" stroke-width="1.6"/>
<path d="M62.5 30.5 L66 25.5 L69.5 30.5 Z" fill="#5e2424"/>
<path d="M469 130 L475 133 L469 136 Z" fill="#5e2424"/>
<text x="29" y="54" font-family="Liberation Mono" font-size="10.6" fill="#1e1e1e" xml:space="preserve">1.5 T</text>
<line x1="63" y1="50" x2="66" y2="50" stroke="#3a3a3a"/>
<text x="29" y="81" font-family="Liberation Mono" font-size="10.6" fill="#1e1e1e" xml:space="preserve">1.0 T</text>
<line x1="63" y1="77" x2="66" y2="77" stroke="#3a3a3a"/>
<text x="29" y="109" font-family="Liberation Mono" font-size="10.6" fill="#1e1e1e" xml:space="preserve">0.5 T</text>
<line x1="63" y1="105" x2="66" y2="105" stroke="#3a3a3a"/>
<text x="29" y="137" font-family="Liberation Mono" font-size="10.6" fill="#1e1e1e" xml:space="preserve">0.0</text>
<line x1="63" y1="133" x2="66" y2="133" stroke="#3a3a3a"/>
<text x="132.0" y="145" text-anchor="middle" font-family="Liberation Mono" font-size="10.6" fill="#1e1e1e">12:30</text>
<text x="198.7" y="145" text-anchor="middle" font-family="Liberation Mono" font-size="10.6" fill="#1e1e1e">12:40</text>
<text x="265.4" y="145" text-anchor="middle" font-family="Liberation Mono" font-size="10.6" fill="#1e1e1e">12:50</text>
<text x="332.1" y="145" text-anchor="middle" font-family="Liberation Mono" font-size="10.6" fill="#1e1e1e">13:00</text>
<text x="398.8" y="145" text-anchor="middle" font-family="Liberation Mono" font-size="10.6" fill="#1e1e1e">13:10</text>
<text x="465.5" y="145" text-anchor="middle" font-family="Liberation Mono" font-size="10.6" fill="#1e1e1e">13:20</text>
<text x="247" y="17" text-anchor="middle" font-family="Liberation Mono" font-size="13.3" fill="#1e1e1e" xml:space="preserve">Diskspace (Volume1-.system-samba4)</text>
<text transform="translate(14 82) rotate(-90)" text-anchor="middle" font-family="Liberation Mono" font-size="11.6" fill="#1e1e1e">Bytes</text>
<text transform="translate(484.5 6) rotate(90)" font-family="Liberation Mono" font-size="9" fill="#6c6c6c" textLength="109" lengthAdjust="spacingAndGlyphs">RRDTOOL / TOBI OETIKER</text>
<line x1="495" y1="0" x2="495" y2="185" stroke="#666" stroke-width="2"/>
<rect x="14" y="153" width="9" height="9" fill="#1f9a1f" stroke="#2a2a2a" stroke-width="0.8"/>
<text x="29" y="162" font-family="Liberation Mono" font-size="11.3" fill="#1e1e1e">Free</text>
<text x="157" y="162" text-anchor="end" font-family="Liberation Mono" font-size="11.3" fill="#1e1e1e" xml:space="preserve">1.8TB Min,</text>
<text x="257" y="162" text-anchor="end" font-family="Liberation Mono" font-size="11.3" fill="#1e1e1e" xml:space="preserve">1.8TB Avg,</text>
<text x="357" y="162" text-anchor="end" font-family="Liberation Mono" font-size="11.3" fill="#1e1e1e" xml:space="preserve">1.8TB Max,</text>
<text x="457" y="162" text-anchor="end" font-family="Liberation Mono" font-size="11.3" fill="#1e1e1e" xml:space="preserve">1.8TB Last</text>
<rect x="14" y="167" width="9" height="9" fill="#b0241a" stroke="#2a2a2a" stroke-width="0.8"/>
<text x="29" y="176" font-family="Liberation Mono" font-size="11.3" fill="#1e1e1e">Used</text>
<text x="157" y="176" text-anchor="end" font-family="Liberation Mono" font-size="11.3" fill="#1e1e1e" xml:space="preserve">168.0kB Min,</text>
<text x="257" y="176" text-anchor="end" font-family="Liberation Mono" font-size="11.3" fill="#1e1e1e" xml:space="preserve">168.0kB Avg,</text>
<text x="357" y="176" text-anchor="end" font-family="Liberation Mono" font-size="11.3" fill="#1e1e1e" xml:space="preserve">168.0kB Max,</text>
<text x="457" y="176" text-anchor="end" font-family="Liberation Mono" font-size="11.3" fill="#1e1e1e" xml:space="preserve">168.0kB Last</text>
</svg>
<div class="a" style="left:775px;top:273px;width:34px;height:31px;background:linear-gradient(#939393,#898989);border:1px solid #808080;border-radius:3px"></div>
<svg class="a" style="left:784px;top:280px" width="16" height="16" viewBox="0 0 16 16"><circle cx="6" cy="6" r="3.5" fill="none" stroke="#444" stroke-width="1.2"/><path d="M8.5 8.5L13 13" stroke="#222" stroke-width="2.2"/><path d="M4 6H8M6 4V8" stroke="#333" stroke-width="1"/></svg>
<div class="a" style="left:775px;top:309px;width:34px;height:32px;background:linear-gradient(#95a3b1,#8796a6);border:1px solid #6f7f8f;border-radius:3px"></div>
<svg class="a" style="left:784px;top:317px" width="16" height="16" viewBox="0 0 16 16"><circle cx="6" cy="6" r="3.5" fill="none" stroke="#444" stroke-width="1.2"/><path d="M8.5 8.5L13 13" stroke="#222" stroke-width="2.2"/><path d="M4 6H8" stroke="#333" stroke-width="1"/></svg>
<div class="a" style="left:775px;top:345px;width:34px;height:8px;background:#8e9aa6;border:1px solid #6f7f8f;border-radius:3px"></div>
<div class="a" style="left:775px;top:835px;width:34px;height:31px;background:linear-gradient(#939393,#898989);border:1px solid #808080;border-radius:3px"></div>
<svg class="a" style="left:784px;top:842px" width="16" height="16" viewBox="0 0 16 16"><circle cx="6" cy="6" r="3.5" fill="none" stroke="#444" stroke-width="1.2"/><path d="M8.5 8.5L13 13" stroke="#222" stroke-width="2.2"/><path d="M4 6H8M6 4V8" stroke="#333" stroke-width="1"/></svg>
<div class="a" style="left:775px;top:871px;width:34px;height:32px;background:linear-gradient(#95a3b1,#8796a6);border:1px solid #6f7f8f;border-radius:3px"></div>
<svg class="a" style="left:784px;top:879px" width="16" height="16" viewBox="0 0 16 16"><circle cx="6" cy="6" r="3.5" fill="none" stroke="#444" stroke-width="1.2"/><path d="M8.5 8.5L13 13" stroke="#222" stroke-width="2.2"/><path d="M4 6H8" stroke="#333" stroke-width="1"/></svg>
<div class="a" style="left:775px;top:907px;width:34px;height:28px;background:linear-gradient(#95a3b1,#8796a6);border:1px solid #6f7f8f;border-radius:3px"></div>
<div class="a" style="left:775px;top:913px;width:34px;text-align:center;font-size:11px;color:#333;line-height:16px;font-family:Liberation Mono,monospace">&lt;&lt;</div>
<div class="a" style="left:775px;top:939px;width:34px;height:28px;background:linear-gradient(#939393,#898989);border:1px solid #808080;border-radius:3px"></div>
<div class="a" style="left:775px;top:945px;width:34px;text-align:center;font-size:11px;color:#333;line-height:16px;font-family:Liberation Mono,monospace">&gt;&gt;</div>
<div class="a" style="left:1902px;top:272px;width:14px;height:705px;background:#898989"></div>
<div class="a" style="left:1902px;top:288px;width:14px;height:361px;background:#747474"></div>
<svg class="a" style="left:1905px;top:277px" width="8" height="7" viewBox="0 0 8 7"><path d="M1 5L4 2L7 5" stroke="#666" stroke-width="1.6" fill="none"/></svg>
<svg class="a" style="left:1904px;top:963px" width="10" height="8" viewBox="0 0 10 8"><path d="M1 2L5 6L9 2" stroke="#333" stroke-width="1.5" fill="none"/></svg>
<!-- shell dialog -->
<div class="a" style="left:664px;top:348px;width:588px;height:446px;background:#000;border:1px solid #3a3a3a;box-shadow:0 0 3px rgba(0,0,0,0.5)"></div>
<div class="a" style="left:665px;top:349px;width:586px;height:25px;background:linear-gradient(#8a8a8a,#5e5e5e 40%,#2c2c2c 72%,#252525);border-bottom:1px solid #444"></div>
<div class="a" style="left:675px;top:353px;font-size:13.8px;font-weight:bold;color:#f4f4f4;line-height:17px">Shell</div>
<svg class="a" style="left:1230px;top:355px" width="11" height="11" viewBox="0 0 12 12"><path d="M2 2L10 10M10 2L2 10" stroke="#8a9098" stroke-width="4" stroke-linecap="round"/><path d="M2 2L10 10M10 2L2 10" stroke="#444" stroke-width="2" stroke-linecap="round"/></svg>
<pre class="a mono" style="margin:0;left:684px;top:400px;font-size:11.65px;line-height:14px;font-weight:bold;color:#e8e8e8">[root@freenas ~]# ls
.bashrc         .login          change_password save_sshkeys    updatep2
.cshrc          .profile        save_cfg        update
.k5login        .shrc           save_rrds.sh    updatep1
[root@freenas ~]# su
[root@freenas] ~# </pre>
<div class="a" style="left:809px;top:471px;width:7px;height:14px;background:#8a8a8a"></div>
<!-- I-beam cursor -->
<svg class="a" style="left:690px;top:522px" width="10" height="19" viewBox="0 0 10 19"><path d="M2 1H4Q5 1 5 3V16Q5 18 4 18H2M8 1H6Q5 1 5 3M5 16Q5 18 6 18H8" stroke="#ccc" stroke-width="1.3" fill="none"/></svg>
<!-- buttons -->
<div class="a" style="left:667px;top:763px;width:51px;height:27px;background:linear-gradient(#e6eff8,#c9dcee);border:1px solid #9fb3c7;border-radius:4px;box-shadow:0 0 1px #fff"></div>
<div class="a" style="left:667px;top:770px;width:51px;text-align:center;font-size:11px;font-weight:bold;color:#66717d;line-height:13px">Incolla</div>
<div class="a" style="left:720px;top:767px;width:58px;height:21px;background:#fff;border:1px solid #b9b9b9"></div>
<div class="a" style="left:723px;top:771px;font-size:11px;color:#444;line-height:13px">80x25</div>
<div class="a" style="left:757px;top:768px;width:20px;height:19px;background:linear-gradient(#fff,#eee);border-left:1px solid #ccc"></div>
<svg class="a" style="left:763px;top:775px" width="8" height="5" viewBox="0 0 8 5"><path d="M0 0H8L4 5Z" fill="#888"/></svg>

<!-- footer -->
<div class="a" id="ftr" style="left:0;top:977px;width:1916px;height:76px;background:linear-gradient(#373737,#1b1b1b);border-top:1px solid #2a2a2a"></div><div class="a" style="left:0;top:978px;width:1916px;height:1px;background:#4a4a4a"></div>
<div class="a" style="left:7px;top:1013px;font-size:12.9px;color:#8c8c8c;line-height:15px;white-space:nowrap">FreeNAS® © 2014 <span style="color:#38495c">iXsystems, Inc.</span></div>
<!-- watermark logo -->
<svg class="a" style="left:1625px;top:980px" width="291" height="73" viewBox="0 0 291 73">
<defs><linearGradient id="xb" x1="0.2" y1="0" x2="0.5" y2="1"><stop offset="0" stop-color="#6c7890"/><stop offset="0.45" stop-color="#34428a"/><stop offset="1" stop-color="#222f8a"/></linearGradient></defs>
<g transform="rotate(16 39 38)"><rect x="12" y="11" width="53" height="53" rx="6" fill="url(#xb)" stroke="#4c5670" stroke-width="1.6"/></g>
<path d="M27 27 L49 47 M52 30 L26 45" stroke="#707072" stroke-width="5" stroke-linecap="round"/>
<ellipse cx="232" cy="35" rx="47" ry="18" fill="#1a3c70" stroke="#2a5088" stroke-width="1"/>
<text x="73" y="49" font-family="Liberation Sans" font-size="27" font-weight="bold" fill="#1e2a58" stroke="#505a70" stroke-width="0.9" textLength="182" lengthAdjust="spacingAndGlyphs">xtremehardware.com</text>
<text x="223" y="41" font-family="Liberation Sans" font-size="14" font-style="italic" fill="#8e9aa8" textLength="50" lengthAdjust="spacingAndGlyphs">systems</text>
<path d="M209 2 Q212 30 218 52 L222 68 M190 22 L208 42 Q212 50 208 62 M218 40 Q230 24 236 10" stroke="#9a3a2c" stroke-width="3.2" fill="none" stroke-linecap="round"/>
<circle cx="200" cy="33" r="5.5" fill="#a84430"/>
<circle cx="223" cy="48" r="1.8" fill="#9a3a2c"/>
<path d="M220 56 Q240 60 260 57" stroke="#1b1b1b" stroke-width="3" fill="none" opacity="0.8"/>
<circle cx="278" cy="24" r="2" fill="#6a6a6a"/>
</svg>

</body></html>
